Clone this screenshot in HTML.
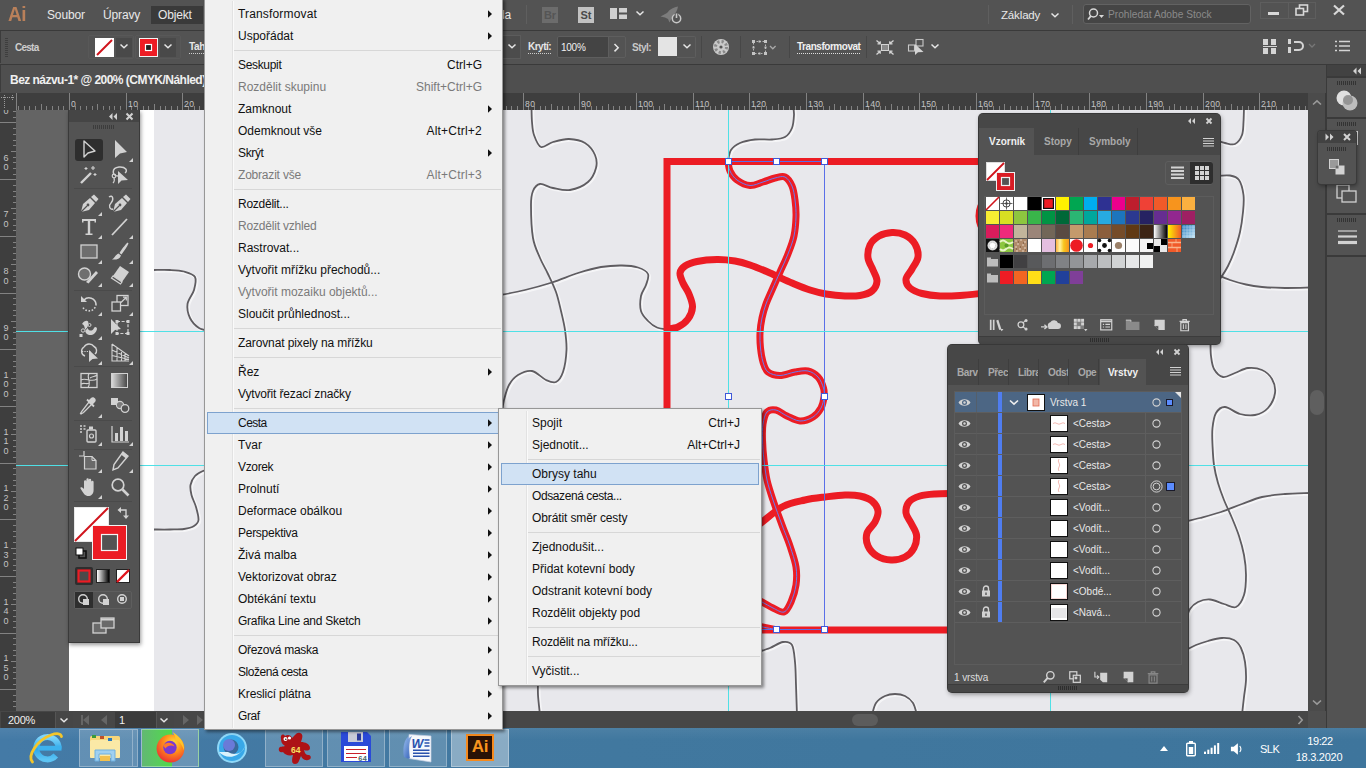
<!DOCTYPE html>
<html lang="cs">
<head>
<meta charset="utf-8">
<title>Adobe Illustrator – Objekt &gt; Cesta &gt; Obrysy tahu</title>
<style>
*{box-sizing:border-box;margin:0;padding:0}
html,body{width:1366px;height:768px;overflow:hidden;background:#535353;font-family:"Liberation Sans",sans-serif;font-size:12px;color:#e6e6e6}
.abs{position:absolute}
#root{position:relative;width:1366px;height:768px;overflow:hidden}
svg{display:block;overflow:visible}
/* ===== bars ===== */
#appbar{left:0;top:0;width:1366px;height:30px;background:#535353}
#appsep{left:0;top:30px;width:1366px;height:1px;background:#3a3a3a}
#ctrlbar{left:0;top:31px;width:1366px;height:33px;background:#535353}
#ctrlsep{left:0;top:64px;width:1366px;height:1px;background:#3a3a3a}
#tabbar{left:0;top:65px;width:1326px;height:28px;background:#4f4f4f}
#hruler{left:0;top:93px;width:1325px;height:17px;background:#404040}
#vruler{left:0;top:110px;width:16px;height:602px;background:#404040}
#paste{left:16px;top:110px;width:1292px;height:601px;background:#646464}
#artboard{left:69px;top:110px;width:1239px;height:601px;background:#fff}
#photo{left:154px;top:110px;width:1154px;height:601px;background:#e8e8ec}
#vscroll{left:1308px;top:93px;width:17px;height:637px;background:#535353}
#status{left:0;top:712px;width:1308px;height:18px;background:#535353}
#dock{left:1325px;top:66px;width:41px;height:664px;background:#424242}
#taskbar{left:0;top:730px;width:1366px;height:38px;background:#3d6f98}
.mtxt{top:8px;font-size:12px;line-height:15px;color:#e8e8e8;white-space:nowrap;letter-spacing:-.15px}
/*MENUCSS*/
.menu{background:#f0f0f0;border:1px solid #979797;box-shadow:2px 2px 3px rgba(0,0,0,.45)}
.mi{font-size:12px;line-height:22px;height:22px;color:#111;white-space:nowrap;letter-spacing:0}
.mi.dis{color:#7a7a7a}
/*MENUCSSE*/
/*PANCSS*/
.panel{background:#535353;border-radius:4px;box-shadow:0 0 0 1px #383838,1px 2px 5px rgba(0,0,0,.45)}
.ptab{height:27px;line-height:28px;font-size:10px;font-weight:bold;color:#a9a9a9;padding-left:10px;border-right:1px solid #3e3e3e;background:#474747;white-space:nowrap;overflow:hidden;letter-spacing:0}
.ptab.act{background:#535353;color:#f0f0f0;border-right:none}
.ltab{height:26px;line-height:27px;padding-left:9px;letter-spacing:-.4px}
.ltxt{font-size:10px;line-height:22px;color:#e8e8e8;white-space:nowrap;letter-spacing:0}
/*PANCSSE*/
</style>
</head>
<body>
<div id="root">
<!-- APPBAR -->

<div id="appbar" class="abs">
  <div class="abs" style="left:8px;top:2px;font-size:21px;line-height:24px;font-weight:bold;color:#b9805a;letter-spacing:-.5px;transform:scaleX(.9);transform-origin:0 0">Ai</div>
  <div class="abs mtxt" style="left:47px">Soubor</div>
  <div class="abs mtxt" style="left:103px">Úpravy</div>
  <div class="abs" style="left:151px;top:6px;width:52px;height:18px;background:#3a3a3a"></div>
  <div class="abs mtxt" style="left:158px">Objekt</div>
  <div class="abs mtxt" style="left:498px">da</div>
  <div class="abs" style="left:526px;top:5px;width:1px;height:19px;background:#5f5f5f"></div>
  <div class="abs" style="left:542px;top:7px;width:16px;height:16px;background:#6c6c6c;color:#555;font-weight:bold;font-size:11px;line-height:16px;text-align:center">Br</div>
  <div class="abs" style="left:578px;top:7px;width:16px;height:16px;background:#c2c2c2;color:#4a4a4a;font-weight:bold;font-size:11px;line-height:16px;text-align:center">St</div>
  <svg class="abs" style="left:610px;top:8px" width="18" height="12"><rect x="0" y="0" width="7" height="11" fill="#d0d0d0"/><rect x="9" y="0" width="8" height="4.5" fill="#d0d0d0"/><rect x="9" y="6.5" width="8" height="4.5" fill="#d0d0d0"/></svg>
  <svg class="abs" style="left:635px;top:10px" width="10" height="7"><path d="M1.5 1.5 L5 4.8 L8.5 1.5" fill="none" stroke="#e6e6e6" stroke-width="1.5"/></svg>
  <svg class="abs" style="left:659px;top:5px" width="24" height="20"><path d="M1.5 11.5 L8 8 C11 4 15 2 19 1.5 C18.5 5 17 8 13.5 11.5 L10.5 17.5 L9 14 L6 12.5 Z" fill="#7c7c7c"/><circle cx="17.5" cy="13.5" r="4.2" fill="#535353" stroke="#c8c8c8" stroke-width="1.5"/><path d="M17.5 8.2 V13" stroke="#535353" stroke-width="3.6"/><path d="M17.5 8.5 V13" stroke="#c8c8c8" stroke-width="1.6"/></svg>
  <div class="abs" style="left:988px;top:5px;width:1px;height:19px;background:#5f5f5f"></div>
  <div class="abs mtxt" style="left:1001px;font-size:11.5px">Základy</div>
  <svg class="abs" style="left:1050px;top:12px" width="10" height="7"><path d="M1.5 1.5 L5 4.8 L8.5 1.5" fill="none" stroke="#e6e6e6" stroke-width="1.5"/></svg>
  <div class="abs" style="left:1072px;top:5px;width:1px;height:19px;background:#5f5f5f"></div>
  <div class="abs" style="left:1083px;top:4px;width:168px;height:20px;background:#454545;border:1px solid #626262;border-radius:3px"></div>
  <svg class="abs" style="left:1087px;top:7px" width="20" height="14"><circle cx="6.5" cy="6" r="4" fill="none" stroke="#d8d8d8" stroke-width="1.5"/><path d="M3.8 9.2 L1 12.5" stroke="#d8d8d8" stroke-width="1.8"/><path d="M12 8 h5 l-2.5 3 z" fill="#d8d8d8"/></svg>
  <div class="abs" style="left:1108px;top:8px;font-size:10.2px;line-height:13px;color:#8a8a8a;white-space:nowrap">Prohledat Adobe Stock</div>
  <div class="abs" style="left:1260px;top:2px;width:28px;height:17px;border:1px solid #5e5e5e;border-right:none"></div>
  <div class="abs" style="left:1288px;top:2px;width:28px;height:17px;border:1px solid #5e5e5e;"></div>
  <div class="abs" style="left:1268px;top:12px;width:11px;height:3px;background:#d8d8d8"></div>
  <svg class="abs" style="left:1295px;top:4px" width="14" height="12"><rect x="4.5" y="1" width="8" height="6.5" fill="none" stroke="#d8d8d8" stroke-width="1.6"/><rect x="1" y="4.5" width="7.5" height="6.5" fill="#535353" stroke="#d8d8d8" stroke-width="1.6"/></svg>
  <svg class="abs" style="left:1332px;top:4px" width="14" height="12"><path d="M2 1.5 L12 10.5 M12 1.5 L2 10.5" stroke="#d8d8d8" stroke-width="2.2"/></svg>
</div>

<div id="appsep" class="abs"></div>

<div id="ctrlbar" class="abs">
  <div class="abs" style="left:0;top:0;width:1px;height:32px;background:#3c3c3c"></div>
  <div class="abs" style="left:5px;top:7px;width:3px;height:20px;background:repeating-linear-gradient(#3e3e3e 0 1px,#535353 1px 2px)"></div>
  <div class="abs" style="left:15px;top:10px;font-size:10px;line-height:13px;font-weight:bold;color:#cdcdcd;letter-spacing:-.75px">Cesta</div>
  <div class="abs" style="left:88px;top:4px;width:46px;height:24px;border:1px solid #585858;border-radius:2px"></div>
  <svg class="abs" style="left:95px;top:7px" width="19" height="19"><rect width="19" height="19" fill="#fff"/><path d="M2 17 L17 2" stroke="#d0141c" stroke-width="2"/></svg>
  <div class="abs" style="left:116px;top:7px;width:16px;height:19px;background:#494949"></div><svg class="abs" style="left:119px;top:12px" width="10" height="7"><path d="M1.5 1.5 L5 4.8 L8.5 1.5" fill="none" stroke="#e6e6e6" stroke-width="1.5"/></svg>
  <div class="abs" style="left:135px;top:4px;width:46px;height:24px;border:1px solid #585858;border-radius:2px"></div>
  <svg class="abs" style="left:139px;top:7px" width="19" height="19"><rect width="19" height="19" fill="#ed1c24"/><rect x="0.5" y="0.5" width="18" height="18" fill="none" stroke="#f3f3f3" stroke-width="1"/><rect x="6.5" y="6.5" width="6" height="6" fill="#222" stroke="#fff" stroke-width="1.2"/></svg>
  <div class="abs" style="left:160px;top:7px;width:16px;height:19px;background:#494949"></div><svg class="abs" style="left:163px;top:12px" width="10" height="7"><path d="M1.5 1.5 L5 4.8 L8.5 1.5" fill="none" stroke="#e6e6e6" stroke-width="1.5"/></svg>
  <div class="abs" style="left:189px;top:9px;font-size:10px;font-weight:bold;color:#e6e6e6;border-bottom:1px dotted #ccc;line-height:13px;letter-spacing:-.4px">Tah:</div>
  <div class="abs" style="left:503px;top:4px;width:18px;height:24px;border:1px solid #5c5c5c;border-left:none;background:#4c4c4c"></div><svg class="abs" style="left:507px;top:12px" width="10" height="7"><path d="M1.5 1.5 L5 4.8 L8.5 1.5" fill="none" stroke="#e6e6e6" stroke-width="1.5"/></svg>
  <div class="abs" style="left:528px;top:9px;font-size:10px;font-weight:bold;color:#e6e6e6;border-bottom:1px dotted #ccc;line-height:13px;letter-spacing:-.5px">Krytí:</div>
  <div class="abs" style="left:557px;top:5px;width:52px;height:22px;background:#444;border:1px solid #5e5e5e;border-radius:2px 0 0 2px"></div>
  <div class="abs" style="left:561px;top:10px;font-size:10px;line-height:13px;color:#f0f0f0;letter-spacing:-.25px">100%</div>
  <div class="abs" style="left:608px;top:5px;width:18px;height:22px;border:1px solid #5e5e5e;border-radius:0 2px 2px 0"></div>
  <svg class="abs" style="left:613px;top:12px" width="8" height="10"><path d="M1.5 1 L5.2 4.7 L1.5 8.4" fill="none" stroke="#e6e6e6" stroke-width="1.5"/></svg>
  <div class="abs" style="left:632px;top:10px;font-size:10px;line-height:13px;font-weight:bold;color:#c8c8c8;letter-spacing:-.5px">Styl:</div>
  <div class="abs" style="left:658px;top:6px;width:19px;height:19px;background:#e4e4e4"></div>
  <div class="abs" style="left:677px;top:5px;width:19px;height:22px;border:1px solid #5e5e5e;border-left:none;border-radius:0 2px 2px 0"></div><svg class="abs" style="left:682px;top:12px" width="10" height="7"><path d="M1.5 1.5 L5 4.8 L8.5 1.5" fill="none" stroke="#e6e6e6" stroke-width="1.5"/></svg>
  <div class="abs" style="left:701px;top:5px;width:1px;height:22px;background:#474747"></div>
  <svg class="abs" style="left:712px;top:7px" width="18" height="18"><circle cx="9" cy="9" r="8" fill="#c9c9c9"/><circle cx="9" cy="9" r="5.5" fill="none" stroke="#8a8a8a" stroke-width="3" stroke-dasharray="2.2 2.1"/><circle cx="9" cy="9" r="1.6" fill="#555"/></svg>
  <div class="abs" style="left:740px;top:5px;width:1px;height:22px;background:#474747"></div>
  <svg class="abs" style="left:752px;top:9px" width="34" height="16"><rect x="1.5" y="1.5" width="12" height="12" fill="none" stroke="#b4b4b4" stroke-width="1" stroke-dasharray="1.5 1.5"/><g fill="#c4c4c4"><rect x="0" y="0" width="3" height="3"/><rect x="12" y="0" width="3" height="3"/><rect x="0" y="12" width="3" height="3"/><rect x="12" y="12" width="3" height="3"/><rect x="6.5" y="0.5" width="2" height="2"/><rect x="6.5" y="12.5" width="2" height="2"/><rect x="0.5" y="6.5" width="2" height="2"/><rect x="12.5" y="6.5" width="2" height="2"/></g><path d="M18 6 L20.8 8.8 L23.6 6" fill="none" stroke="#a8a8a8" stroke-width="1.3"/></svg>
  <div class="abs" style="left:789px;top:5px;width:1px;height:22px;background:#474747"></div><div class="abs" style="left:866px;top:5px;width:1px;height:22px;background:#474747"></div>
  <div class="abs" style="left:797px;top:9px;font-size:10px;font-weight:bold;color:#f0f0f0;border-bottom:1px dotted #ddd;line-height:13px;letter-spacing:-.46px">Transformovat</div>
  <svg class="abs" style="left:876px;top:9px" width="18" height="15"><rect x="5.5" y="4.5" width="7" height="6" fill="#8a8a8a" stroke="#d4d4d4" stroke-width="1"/><g stroke="#d4d4d4" stroke-width="1.3" fill="none"><path d="M0.5 0.5 L4 3.5 M1.5 3.8 H4.2 V1.2"/><path d="M17.5 0.5 L14 3.5 M16.5 3.8 H13.8 V1.2"/><path d="M0.5 14.5 L4 11.5 M1.5 11.2 H4.2 V13.8"/><path d="M17.5 14.5 L14 11.5 M16.5 11.2 H13.8 V13.8"/></g></svg>
  <svg class="abs" style="left:907px;top:7px" width="20" height="20"><rect x="9" y="1.5" width="7" height="6.5" fill="none" stroke="#c8c8c8" stroke-width="1.1"/><rect x="1.5" y="7" width="6" height="6" fill="none" stroke="#c8c8c8" stroke-width="1.1"/><path d="M8 6 L8 17 L11 14.2 L16.5 14 Z" fill="#d4d4d4"/></svg><svg class="abs" style="left:930px;top:12px" width="10" height="7"><path d="M1.5 1.5 L5 4.8 L8.5 1.5" fill="none" stroke="#e6e6e6" stroke-width="1.5"/></svg>
  <svg class="abs" style="left:1263px;top:8px" width="15" height="15"><rect x="0" y="0" width="5" height="6" fill="#d4d4d4"/><rect x="8" y="0" width="5" height="6" fill="#d4d4d4"/><rect x="0" y="9" width="5" height="6" fill="#d4d4d4"/><rect x="8" y="9" width="5" height="6" fill="#d4d4d4"/><rect x="0" y="7" width="14" height="1" fill="#d4d4d4"/></svg>
  <svg class="abs" style="left:1288px;top:7px" width="30" height="17"><rect x="0" y="1" width="3" height="5" fill="#d4d4d4"/><rect x="0" y="9" width="3" height="6" fill="#d4d4d4"/><path d="M6 4 H11 A4 4 0 0 1 11 12 H6" fill="none" stroke="#d4d4d4" stroke-width="2"/><path d="M21 6 L24 9 L27 6" fill="none" stroke="#777" stroke-width="1.3"/></svg>
  <svg class="abs" style="left:1335px;top:9px" width="16" height="12"><path d="M4 1.5 H15 M4 6 H15 M4 10.5 H15" stroke="#d4d4d4" stroke-width="1.6"/><path d="M0 1.5 H2 M0 6 H2 M0 10.5 H2" stroke="#d4d4d4" stroke-width="1.6"/></svg>
</div>

<div id="ctrlsep" class="abs"></div>

<div id="tabbar" class="abs">
  <div class="abs" style="left:0;top:0;width:1px;height:27px;background:#3c3c3c"></div>
  <div class="abs" style="left:10px;top:8px;font-size:12px;line-height:15px;font-weight:bold;color:#f0f0f0;white-space:nowrap;letter-spacing:-.53px">Bez názvu-1* @ 200% (CMYK/Náhled)</div>
</div>

<svg id="hruler" class="abs" width="1326" height="17" style="left:0;top:93px;background:#3e3e3e;overflow:hidden">
<path d="M18.5 13V17M24.5 13V17M29.5 13V17M35.5 13V17M41.5 11V17M46.5 13V17M52.5 13V17M58.5 13V17M63.5 13V17M69.5 0V17M75.5 13V17M80.5 13V17M86.5 13V17M92.5 13V17M97.5 11V17M103.5 13V17M109.5 13V17M114.5 13V17M120.5 13V17M126.5 0V17M131.5 13V17M137.5 13V17M143.5 13V17M148.5 13V17M154.5 11V17M160.5 13V17M165.5 13V17M171.5 13V17M177.5 13V17M182.5 0V17M188.5 13V17M194.5 13V17M199.5 13V17M205.5 13V17M211.5 11V17M216.5 13V17M222.5 13V17M228.5 13V17M233.5 13V17M239.5 0V17M245.5 13V17M250.5 13V17M256.5 13V17M262.5 13V17M267.5 11V17M273.5 13V17M279.5 13V17M284.5 13V17M290.5 13V17M296.5 0V17M301.5 13V17M307.5 13V17M313.5 13V17M318.5 13V17M324.5 11V17M330.5 13V17M335.5 13V17M341.5 13V17M347.5 13V17M352.5 0V17M358.5 13V17M364.5 13V17M369.5 13V17M375.5 13V17M381.5 11V17M386.5 13V17M392.5 13V17M398.5 13V17M403.5 13V17M409.5 0V17M415.5 13V17M420.5 13V17M426.5 13V17M432.5 13V17M437.5 11V17M443.5 13V17M449.5 13V17M454.5 13V17M460.5 13V17M466.5 0V17M471.5 13V17M477.5 13V17M483.5 13V17M489.5 13V17M494.5 11V17M500.5 13V17M506.5 13V17M511.5 13V17M517.5 13V17M523.5 0V17M528.5 13V17M534.5 13V17M540.5 13V17M545.5 13V17M551.5 11V17M557.5 13V17M562.5 13V17M568.5 13V17M574.5 13V17M579.5 0V17M585.5 13V17M591.5 13V17M596.5 13V17M602.5 13V17M608.5 11V17M613.5 13V17M619.5 13V17M625.5 13V17M630.5 13V17M636.5 0V17M642.5 13V17M647.5 13V17M653.5 13V17M659.5 13V17M664.5 11V17M670.5 13V17M676.5 13V17M681.5 13V17M687.5 13V17M693.5 0V17M698.5 13V17M704.5 13V17M710.5 13V17M715.5 13V17M721.5 11V17M727.5 13V17M732.5 13V17M738.5 13V17M744.5 13V17M749.5 0V17M755.5 13V17M761.5 13V17M766.5 13V17M772.5 13V17M778.5 11V17M783.5 13V17M789.5 13V17M795.5 13V17M800.5 13V17M806.5 0V17M812.5 13V17M817.5 13V17M823.5 13V17M829.5 13V17M834.5 11V17M840.5 13V17M846.5 13V17M851.5 13V17M857.5 13V17M863.5 0V17M868.5 13V17M874.5 13V17M880.5 13V17M885.5 13V17M891.5 11V17M897.5 13V17M902.5 13V17M908.5 13V17M914.5 13V17M919.5 0V17M925.5 13V17M931.5 13V17M936.5 13V17M942.5 13V17M948.5 11V17M953.5 13V17M959.5 13V17M965.5 13V17M970.5 13V17M976.5 0V17M982.5 13V17M987.5 13V17M993.5 13V17M999.5 13V17M1004.5 11V17M1010.5 13V17M1016.5 13V17M1021.5 13V17M1027.5 13V17M1033.5 0V17M1038.5 13V17M1044.5 13V17M1050.5 13V17M1055.5 13V17M1061.5 11V17M1067.5 13V17M1072.5 13V17M1078.5 13V17M1084.5 13V17M1089.5 0V17M1095.5 13V17M1101.5 13V17M1106.5 13V17M1112.5 13V17M1118.5 11V17M1123.5 13V17M1129.5 13V17M1135.5 13V17M1140.5 13V17M1146.5 0V17M1152.5 13V17M1157.5 13V17M1163.5 13V17M1169.5 13V17M1174.5 11V17M1180.5 13V17M1186.5 13V17M1191.5 13V17M1197.5 13V17M1203.5 0V17M1208.5 13V17M1214.5 13V17M1220.5 13V17M1225.5 13V17M1231.5 11V17M1237.5 13V17M1242.5 13V17M1248.5 13V17M1254.5 13V17M1259.5 0V17M1265.5 13V17M1271.5 13V17M1276.5 13V17M1282.5 13V17M1288.5 11V17M1294.5 13V17M1299.5 13V17M1305.5 13V17" stroke="#828282" stroke-width="1" fill="none"/>
<g font-size="8.6" fill="#c4c4c4" letter-spacing="0.35">
<text x="71" y="14">0</text>
<text x="128" y="14">10</text>
<text x="184" y="14">20</text>
<text x="241" y="14">30</text>
<text x="298" y="14">40</text>
<text x="354" y="14">50</text>
<text x="411" y="14">60</text>
<text x="468" y="14">70</text>
<text x="525" y="14">80</text>
<text x="581" y="14">90</text>
<text x="638" y="14">100</text>
<text x="695" y="14">110</text>
<text x="751" y="14">120</text>
<text x="808" y="14">130</text>
<text x="865" y="14">140</text>
<text x="921" y="14">150</text>
<text x="978" y="14">160</text>
<text x="1035" y="14">170</text>
<text x="1091" y="14">180</text>
<text x="1148" y="14">190</text>
<text x="1205" y="14">200</text>
<text x="1261" y="14">210</text>
</g>
<rect x="0" y="0" width="16" height="17" fill="#3e3e3e"/><path d="M4.5 2V15M12.5 2V8M1 4.5H15" stroke="#9a9a9a" stroke-width="1" stroke-dasharray="1 1" fill="none"/><path d="M16.5 0V17" stroke="#828282"/>
</svg>
<svg id="vruler" class="abs" width="16" height="601" style="left:0;top:110px;background:#3e3e3e;overflow:hidden">
<path d="M13 1.5H16M13 7.5H16M0 12.5H16M13 18.5H16M13 24.5H16M13 30.5H16M13 35.5H16M11 41.5H16M13 47.5H16M13 52.5H16M13 58.5H16M13 64.5H16M0 69.5H16M13 75.5H16M13 81.5H16M13 86.5H16M13 92.5H16M11 98.5H16M13 103.5H16M13 109.5H16M13 115.5H16M13 120.5H16M0 126.5H16M13 132.5H16M13 137.5H16M13 143.5H16M13 149.5H16M11 154.5H16M13 160.5H16M13 166.5H16M13 171.5H16M13 177.5H16M0 183.5H16M13 188.5H16M13 194.5H16M13 200.5H16M13 205.5H16M11 211.5H16M13 217.5H16M13 222.5H16M13 228.5H16M13 234.5H16M0 239.5H16M13 245.5H16M13 251.5H16M13 256.5H16M13 262.5H16M11 268.5H16M13 273.5H16M13 279.5H16M13 285.5H16M13 290.5H16M0 296.5H16M13 302.5H16M13 307.5H16M13 313.5H16M13 319.5H16M11 324.5H16M13 330.5H16M13 336.5H16M13 341.5H16M13 347.5H16M0 353.5H16M13 358.5H16M13 364.5H16M13 370.5H16M13 375.5H16M11 381.5H16M13 387.5H16M13 392.5H16M13 398.5H16M13 404.5H16M0 409.5H16M13 415.5H16M13 421.5H16M13 426.5H16M13 432.5H16M11 438.5H16M13 443.5H16M13 449.5H16M13 455.5H16M13 460.5H16M0 466.5H16M13 472.5H16M13 477.5H16M13 483.5H16M13 489.5H16M11 494.5H16M13 500.5H16M13 506.5H16M13 511.5H16M13 517.5H16M0 523.5H16M13 528.5H16M13 534.5H16M13 540.5H16M13 545.5H16M11 551.5H16M13 557.5H16M13 562.5H16M13 568.5H16M13 574.5H16M0 579.5H16M13 585.5H16M13 591.5H16M13 596.5H16" stroke="#828282" stroke-width="1" fill="none"/>
<g font-size="9" fill="#c4c4c4">
<text x="3.5" y="-6.0">5</text>
<text x="3.5" y="3.5">0</text>
<text x="3.5" y="50.7">6</text>
<text x="3.5" y="60.2">0</text>
<text x="3.5" y="107.4">7</text>
<text x="3.5" y="116.9">0</text>
<text x="3.5" y="164.1">8</text>
<text x="3.5" y="173.6">0</text>
<text x="3.5" y="220.8">9</text>
<text x="3.5" y="230.3">0</text>
<text x="3.5" y="267.9">1</text>
<text x="3.5" y="277.4">0</text>
<text x="3.5" y="286.9">0</text>
<text x="3.5" y="324.6">1</text>
<text x="3.5" y="334.1">1</text>
<text x="3.5" y="343.6">0</text>
<text x="3.5" y="381.3">1</text>
<text x="3.5" y="390.8">2</text>
<text x="3.5" y="400.3">0</text>
<text x="3.5" y="438.0">1</text>
<text x="3.5" y="447.5">3</text>
<text x="3.5" y="457.0">0</text>
<text x="3.5" y="494.7">1</text>
<text x="3.5" y="504.2">4</text>
<text x="3.5" y="513.7">0</text>
<text x="3.5" y="551.4">1</text>
<text x="3.5" y="560.9">5</text>
<text x="3.5" y="570.4">0</text>
</g></svg>
<div id="paste" class="abs"></div>
<div id="artboard" class="abs"></div>
<div id="photo" class="abs"></div>
<!-- CV-START --><svg id="cv" class="abs" style="left:0;top:0" width="1366" height="768" viewBox="0 0 1366 768"><defs><clipPath id="cvclip"><rect x="154" y="110" width="1154" height="601"/></clipPath><filter id="soft" x="-5%" y="-5%" width="110%" height="110%"><feGaussianBlur stdDeviation="0.55"/></filter></defs>
<g clip-path="url(#cvclip)">
<g fill="none" stroke="#fff" stroke-width="3" opacity=".6" transform="translate(1.2,1.2)" filter="url(#soft)">
<path d="M154.0 270.0C156.7 270.0 165.0 269.8 170.0 270.0C175.0 270.2 179.8 270.3 184.0 271.5C188.2 272.7 193.3 273.9 195.0 277.0C196.7 280.1 195.2 285.5 194.0 290.0C192.8 294.5 188.2 299.3 187.5 304.0C186.8 308.7 188.1 314.0 190.0 318.0C191.9 322.0 195.7 325.8 199.0 328.0C202.3 330.2 208.2 330.5 210.0 331.0"/>
<path d="M154.0 529.5C156.7 529.5 165.0 529.6 170.0 529.5C175.0 529.4 180.0 529.6 184.0 529.0C188.0 528.4 191.6 527.5 194.0 526.0C196.4 524.5 198.2 523.2 198.5 520.0C198.8 516.8 197.2 511.2 196.0 507.0C194.8 502.8 192.4 498.7 191.5 495.0C190.6 491.3 189.9 488.2 190.5 485.0C191.1 481.8 192.9 478.3 195.0 476.0C197.1 473.7 200.5 472.2 203.0 471.0C205.5 469.8 208.8 469.3 210.0 469.0"/>
<path d="M531.5 108.0C531.6 110.3 531.6 117.5 532.0 122.0C532.4 126.5 532.5 130.8 534.0 135.0C535.5 139.2 537.8 145.8 541.0 147.0C544.2 148.2 548.3 143.3 553.0 142.0C557.7 140.7 563.7 138.8 569.0 139.0C574.3 139.2 580.7 140.3 585.0 143.0C589.3 145.7 593.2 150.8 595.0 155.0C596.8 159.2 597.2 163.5 596.0 168.0C594.8 172.5 592.3 178.3 588.0 182.0C583.7 185.7 575.8 189.0 570.0 190.0C564.2 191.0 558.0 189.0 553.0 188.0C548.0 187.0 543.3 183.5 540.0 184.0C536.7 184.5 534.5 187.5 533.0 191.0C531.5 194.5 531.0 197.2 531.0 205.0C531.0 212.8 531.5 229.2 533.0 238.0C534.5 246.8 537.5 252.0 540.0 258.0C542.5 264.0 545.3 268.3 548.0 274.0C550.7 279.7 553.8 285.8 556.0 292.0C558.2 298.2 559.5 304.7 561.0 311.0C562.5 317.3 564.1 323.5 565.0 330.0C565.9 336.5 566.8 343.0 566.5 350.0C566.2 357.0 564.8 366.7 563.0 372.0C561.2 377.3 558.8 380.7 556.0 382.0C553.2 383.3 550.0 381.8 546.0 380.0C542.0 378.2 536.7 371.8 532.0 371.0C527.3 370.2 521.8 372.7 518.0 375.0C514.2 377.3 511.3 380.8 509.0 385.0C506.7 389.2 505.2 395.5 504.0 400.0C502.8 404.5 502.3 410.0 502.0 412.0"/>
<path d="M498.0 295.5C502.5 294.6 516.0 292.2 525.0 290.0C534.0 287.8 543.2 285.3 552.0 282.5C560.8 279.7 569.8 275.6 578.0 273.0C586.2 270.4 593.7 268.2 601.0 267.0C608.3 265.8 615.8 265.4 622.0 265.5C628.2 265.6 633.7 266.1 638.0 267.5C642.3 268.9 646.7 271.1 648.0 274.0C649.3 276.9 647.2 281.3 646.0 285.0C644.8 288.7 641.8 291.7 641.0 296.0C640.2 300.3 639.8 306.8 641.0 311.0C642.2 315.2 645.3 318.2 648.0 321.0C650.7 323.8 653.7 326.1 657.0 327.5C660.3 328.9 666.2 329.2 668.0 329.5"/>
<path d="M728.0 161.0C728.5 159.2 729.0 153.0 731.0 150.0C733.0 147.0 736.0 144.8 740.0 143.0C744.0 141.2 749.7 140.1 755.0 139.5C760.3 138.9 767.0 139.9 772.0 139.5C777.0 139.1 781.7 138.9 785.0 137.0C788.3 135.1 790.5 131.7 792.0 128.0C793.5 124.3 793.8 118.7 794.0 115.0C794.2 111.3 793.2 107.5 793.0 106.0"/>
<path d="M538.0 680.0C538.0 682.5 537.7 689.2 538.0 695.0C538.3 700.8 539.7 711.7 540.0 715.0"/>
<path d="M758.0 652.0C760.0 651.3 765.8 649.7 770.0 648.0C774.2 646.3 779.3 642.5 783.0 642.0C786.7 641.5 790.0 641.7 792.0 645.0C794.0 648.3 794.3 655.3 795.0 662.0C795.7 668.7 795.7 676.2 796.0 685.0C796.3 693.8 796.8 710.0 797.0 715.0"/>
<path d="M872.0 715.0C872.7 713.0 873.8 706.2 876.0 703.0C878.2 699.8 881.8 697.5 885.0 696.0C888.2 694.5 891.7 694.0 895.0 694.0C898.3 694.0 902.0 694.5 905.0 696.0C908.0 697.5 911.0 699.8 913.0 703.0C915.0 706.2 916.3 713.0 917.0 715.0"/>
<path d="M1244.0 108.0C1243.9 110.3 1243.8 117.5 1243.5 122.0C1243.2 126.5 1243.4 131.3 1242.0 135.0C1240.6 138.7 1237.8 142.7 1235.0 144.0C1232.2 145.3 1228.3 143.7 1225.0 143.0C1221.7 142.3 1216.7 140.5 1215.0 140.0"/>
<path d="M1215.0 176.0C1217.5 175.9 1226.0 174.8 1230.0 175.5C1234.0 176.2 1236.8 176.8 1239.0 180.0C1241.2 183.2 1242.8 189.7 1243.5 195.0C1244.2 200.3 1243.6 205.8 1243.0 212.0C1242.4 218.2 1241.5 225.3 1240.0 232.0C1238.5 238.7 1236.0 246.3 1234.0 252.0C1232.0 257.7 1230.3 261.5 1228.0 266.0C1225.7 270.5 1222.7 275.0 1220.0 279.0C1217.3 283.0 1213.3 288.2 1212.0 290.0"/>
<path d="M1215.0 274.0C1217.5 275.0 1224.8 278.2 1230.0 280.0C1235.2 281.8 1240.7 283.3 1246.0 284.5C1251.3 285.7 1255.5 286.4 1262.0 287.0C1268.5 287.6 1277.0 287.9 1285.0 288.0C1293.0 288.1 1305.8 287.6 1310.0 287.5"/>
<path d="M1210.5 343.0C1210.6 345.2 1210.4 351.7 1211.0 356.0C1211.6 360.3 1212.0 365.5 1214.0 369.0C1216.0 372.5 1219.5 376.3 1223.0 377.0C1226.5 377.7 1230.8 374.5 1235.0 373.0C1239.2 371.5 1243.5 368.5 1248.0 368.0C1252.5 367.5 1258.0 368.2 1262.0 370.0C1266.0 371.8 1269.8 375.2 1272.0 379.0C1274.2 382.8 1275.7 388.2 1275.0 393.0C1274.3 397.8 1271.3 404.3 1268.0 408.0C1264.7 411.7 1259.7 414.0 1255.0 415.0C1250.3 416.0 1245.0 415.3 1240.0 414.0C1235.0 412.7 1229.0 407.2 1225.0 407.0C1221.0 406.8 1218.1 409.5 1216.0 413.0C1213.9 416.5 1213.1 422.7 1212.5 428.0C1211.9 433.3 1212.2 438.8 1212.5 445.0C1212.8 451.2 1213.1 458.7 1214.0 465.0C1214.9 471.3 1216.3 477.2 1218.0 483.0C1219.7 488.8 1221.7 494.2 1224.0 500.0C1226.3 505.8 1229.5 512.0 1232.0 518.0C1234.5 524.0 1237.0 529.8 1239.0 536.0C1241.0 542.2 1242.8 548.5 1244.0 555.0C1245.2 561.5 1246.0 568.3 1246.0 575.0C1246.0 581.7 1245.7 589.7 1244.0 595.0C1242.3 600.3 1239.3 605.5 1236.0 607.0C1232.7 608.5 1228.3 605.2 1224.0 604.0C1219.7 602.8 1214.3 599.8 1210.0 599.5C1205.7 599.2 1201.3 600.4 1198.0 602.0C1194.7 603.6 1192.0 606.0 1190.0 609.0C1188.0 612.0 1186.7 618.2 1186.0 620.0"/>
<path d="M1183.0 522.0C1185.8 521.3 1193.7 519.7 1200.0 518.0C1206.3 516.3 1214.0 514.3 1221.0 512.0C1228.0 509.7 1235.2 506.5 1242.0 504.0C1248.8 501.5 1254.8 498.7 1262.0 497.0C1269.2 495.3 1277.0 494.7 1285.0 494.0C1293.0 493.3 1305.8 493.2 1310.0 493.0"/>
<path d="M1186.0 650.0C1187.7 649.2 1192.3 646.5 1196.0 645.0C1199.7 643.5 1203.7 642.2 1208.0 641.0C1212.3 639.8 1217.7 638.2 1222.0 638.0C1226.3 637.8 1230.8 638.3 1234.0 640.0C1237.2 641.7 1239.2 644.3 1241.0 648.0C1242.8 651.7 1244.2 656.7 1245.0 662.0C1245.8 667.3 1246.2 674.2 1246.0 680.0C1245.8 685.8 1244.7 691.2 1244.0 697.0C1243.3 702.8 1242.3 712.0 1242.0 715.0"/>
</g>
<g fill="none" stroke="#5e5c61" stroke-width="1.8" stroke-linecap="round" filter="url(#soft)">
<path d="M154.0 270.0C156.7 270.0 165.0 269.8 170.0 270.0C175.0 270.2 179.8 270.3 184.0 271.5C188.2 272.7 193.3 273.9 195.0 277.0C196.7 280.1 195.2 285.5 194.0 290.0C192.8 294.5 188.2 299.3 187.5 304.0C186.8 308.7 188.1 314.0 190.0 318.0C191.9 322.0 195.7 325.8 199.0 328.0C202.3 330.2 208.2 330.5 210.0 331.0"/>
<path d="M154.0 529.5C156.7 529.5 165.0 529.6 170.0 529.5C175.0 529.4 180.0 529.6 184.0 529.0C188.0 528.4 191.6 527.5 194.0 526.0C196.4 524.5 198.2 523.2 198.5 520.0C198.8 516.8 197.2 511.2 196.0 507.0C194.8 502.8 192.4 498.7 191.5 495.0C190.6 491.3 189.9 488.2 190.5 485.0C191.1 481.8 192.9 478.3 195.0 476.0C197.1 473.7 200.5 472.2 203.0 471.0C205.5 469.8 208.8 469.3 210.0 469.0"/>
<path d="M531.5 108.0C531.6 110.3 531.6 117.5 532.0 122.0C532.4 126.5 532.5 130.8 534.0 135.0C535.5 139.2 537.8 145.8 541.0 147.0C544.2 148.2 548.3 143.3 553.0 142.0C557.7 140.7 563.7 138.8 569.0 139.0C574.3 139.2 580.7 140.3 585.0 143.0C589.3 145.7 593.2 150.8 595.0 155.0C596.8 159.2 597.2 163.5 596.0 168.0C594.8 172.5 592.3 178.3 588.0 182.0C583.7 185.7 575.8 189.0 570.0 190.0C564.2 191.0 558.0 189.0 553.0 188.0C548.0 187.0 543.3 183.5 540.0 184.0C536.7 184.5 534.5 187.5 533.0 191.0C531.5 194.5 531.0 197.2 531.0 205.0C531.0 212.8 531.5 229.2 533.0 238.0C534.5 246.8 537.5 252.0 540.0 258.0C542.5 264.0 545.3 268.3 548.0 274.0C550.7 279.7 553.8 285.8 556.0 292.0C558.2 298.2 559.5 304.7 561.0 311.0C562.5 317.3 564.1 323.5 565.0 330.0C565.9 336.5 566.8 343.0 566.5 350.0C566.2 357.0 564.8 366.7 563.0 372.0C561.2 377.3 558.8 380.7 556.0 382.0C553.2 383.3 550.0 381.8 546.0 380.0C542.0 378.2 536.7 371.8 532.0 371.0C527.3 370.2 521.8 372.7 518.0 375.0C514.2 377.3 511.3 380.8 509.0 385.0C506.7 389.2 505.2 395.5 504.0 400.0C502.8 404.5 502.3 410.0 502.0 412.0"/>
<path d="M498.0 295.5C502.5 294.6 516.0 292.2 525.0 290.0C534.0 287.8 543.2 285.3 552.0 282.5C560.8 279.7 569.8 275.6 578.0 273.0C586.2 270.4 593.7 268.2 601.0 267.0C608.3 265.8 615.8 265.4 622.0 265.5C628.2 265.6 633.7 266.1 638.0 267.5C642.3 268.9 646.7 271.1 648.0 274.0C649.3 276.9 647.2 281.3 646.0 285.0C644.8 288.7 641.8 291.7 641.0 296.0C640.2 300.3 639.8 306.8 641.0 311.0C642.2 315.2 645.3 318.2 648.0 321.0C650.7 323.8 653.7 326.1 657.0 327.5C660.3 328.9 666.2 329.2 668.0 329.5"/>
<path d="M728.0 161.0C728.5 159.2 729.0 153.0 731.0 150.0C733.0 147.0 736.0 144.8 740.0 143.0C744.0 141.2 749.7 140.1 755.0 139.5C760.3 138.9 767.0 139.9 772.0 139.5C777.0 139.1 781.7 138.9 785.0 137.0C788.3 135.1 790.5 131.7 792.0 128.0C793.5 124.3 793.8 118.7 794.0 115.0C794.2 111.3 793.2 107.5 793.0 106.0"/>
<path d="M538.0 680.0C538.0 682.5 537.7 689.2 538.0 695.0C538.3 700.8 539.7 711.7 540.0 715.0"/>
<path d="M758.0 652.0C760.0 651.3 765.8 649.7 770.0 648.0C774.2 646.3 779.3 642.5 783.0 642.0C786.7 641.5 790.0 641.7 792.0 645.0C794.0 648.3 794.3 655.3 795.0 662.0C795.7 668.7 795.7 676.2 796.0 685.0C796.3 693.8 796.8 710.0 797.0 715.0"/>
<path d="M872.0 715.0C872.7 713.0 873.8 706.2 876.0 703.0C878.2 699.8 881.8 697.5 885.0 696.0C888.2 694.5 891.7 694.0 895.0 694.0C898.3 694.0 902.0 694.5 905.0 696.0C908.0 697.5 911.0 699.8 913.0 703.0C915.0 706.2 916.3 713.0 917.0 715.0"/>
<path d="M1244.0 108.0C1243.9 110.3 1243.8 117.5 1243.5 122.0C1243.2 126.5 1243.4 131.3 1242.0 135.0C1240.6 138.7 1237.8 142.7 1235.0 144.0C1232.2 145.3 1228.3 143.7 1225.0 143.0C1221.7 142.3 1216.7 140.5 1215.0 140.0"/>
<path d="M1215.0 176.0C1217.5 175.9 1226.0 174.8 1230.0 175.5C1234.0 176.2 1236.8 176.8 1239.0 180.0C1241.2 183.2 1242.8 189.7 1243.5 195.0C1244.2 200.3 1243.6 205.8 1243.0 212.0C1242.4 218.2 1241.5 225.3 1240.0 232.0C1238.5 238.7 1236.0 246.3 1234.0 252.0C1232.0 257.7 1230.3 261.5 1228.0 266.0C1225.7 270.5 1222.7 275.0 1220.0 279.0C1217.3 283.0 1213.3 288.2 1212.0 290.0"/>
<path d="M1215.0 274.0C1217.5 275.0 1224.8 278.2 1230.0 280.0C1235.2 281.8 1240.7 283.3 1246.0 284.5C1251.3 285.7 1255.5 286.4 1262.0 287.0C1268.5 287.6 1277.0 287.9 1285.0 288.0C1293.0 288.1 1305.8 287.6 1310.0 287.5"/>
<path d="M1210.5 343.0C1210.6 345.2 1210.4 351.7 1211.0 356.0C1211.6 360.3 1212.0 365.5 1214.0 369.0C1216.0 372.5 1219.5 376.3 1223.0 377.0C1226.5 377.7 1230.8 374.5 1235.0 373.0C1239.2 371.5 1243.5 368.5 1248.0 368.0C1252.5 367.5 1258.0 368.2 1262.0 370.0C1266.0 371.8 1269.8 375.2 1272.0 379.0C1274.2 382.8 1275.7 388.2 1275.0 393.0C1274.3 397.8 1271.3 404.3 1268.0 408.0C1264.7 411.7 1259.7 414.0 1255.0 415.0C1250.3 416.0 1245.0 415.3 1240.0 414.0C1235.0 412.7 1229.0 407.2 1225.0 407.0C1221.0 406.8 1218.1 409.5 1216.0 413.0C1213.9 416.5 1213.1 422.7 1212.5 428.0C1211.9 433.3 1212.2 438.8 1212.5 445.0C1212.8 451.2 1213.1 458.7 1214.0 465.0C1214.9 471.3 1216.3 477.2 1218.0 483.0C1219.7 488.8 1221.7 494.2 1224.0 500.0C1226.3 505.8 1229.5 512.0 1232.0 518.0C1234.5 524.0 1237.0 529.8 1239.0 536.0C1241.0 542.2 1242.8 548.5 1244.0 555.0C1245.2 561.5 1246.0 568.3 1246.0 575.0C1246.0 581.7 1245.7 589.7 1244.0 595.0C1242.3 600.3 1239.3 605.5 1236.0 607.0C1232.7 608.5 1228.3 605.2 1224.0 604.0C1219.7 602.8 1214.3 599.8 1210.0 599.5C1205.7 599.2 1201.3 600.4 1198.0 602.0C1194.7 603.6 1192.0 606.0 1190.0 609.0C1188.0 612.0 1186.7 618.2 1186.0 620.0"/>
<path d="M1183.0 522.0C1185.8 521.3 1193.7 519.7 1200.0 518.0C1206.3 516.3 1214.0 514.3 1221.0 512.0C1228.0 509.7 1235.2 506.5 1242.0 504.0C1248.8 501.5 1254.8 498.7 1262.0 497.0C1269.2 495.3 1277.0 494.7 1285.0 494.0C1293.0 493.3 1305.8 493.2 1310.0 493.0"/>
<path d="M1186.0 650.0C1187.7 649.2 1192.3 646.5 1196.0 645.0C1199.7 643.5 1203.7 642.2 1208.0 641.0C1212.3 639.8 1217.7 638.2 1222.0 638.0C1226.3 637.8 1230.8 638.3 1234.0 640.0C1237.2 641.7 1239.2 644.3 1241.0 648.0C1242.8 651.7 1244.2 656.7 1245.0 662.0C1245.8 667.3 1246.2 674.2 1246.0 680.0C1245.8 685.8 1244.7 691.2 1244.0 697.0C1243.3 702.8 1242.3 712.0 1242.0 715.0"/>
</g>
<g fill="none" stroke="#ec1c24" stroke-width="7" stroke-linejoin="miter">
<path d="M1100 161.5 H667 V630 H1100"/><circle cx="1004" cy="216" r="25"/>
<path d="M667.0 329.0C668.8 328.7 674.5 328.7 678.0 327.0C681.5 325.3 685.6 322.3 688.0 319.0C690.4 315.7 692.3 311.2 692.5 307.0C692.7 302.8 690.6 298.0 689.0 294.0C687.4 290.0 684.5 286.5 683.0 283.0C681.5 279.5 679.7 275.8 680.0 273.0C680.3 270.2 682.2 267.9 685.0 266.0C687.8 264.1 691.7 262.6 697.0 261.5C702.3 260.4 710.7 259.6 717.0 259.5C723.3 259.4 729.5 260.1 735.0 261.0C740.5 261.9 744.2 263.0 750.0 265.0C755.8 267.0 763.0 270.0 770.0 273.0C777.0 276.0 785.3 280.2 792.0 283.0C798.7 285.8 804.3 288.2 810.0 290.0C815.7 291.8 820.2 293.0 826.0 294.0C831.8 295.0 839.3 295.8 845.0 296.0C850.7 296.2 855.5 296.3 860.0 295.5C864.5 294.7 869.2 293.4 872.0 291.0C874.8 288.6 876.8 284.5 877.0 281.0C877.2 277.5 874.5 273.8 873.0 270.0C871.5 266.2 868.5 262.2 868.0 258.0C867.5 253.8 868.2 248.7 870.0 245.0C871.8 241.3 875.3 238.1 879.0 236.0C882.7 233.9 887.7 232.7 892.0 232.5C896.3 232.3 901.2 233.1 905.0 235.0C908.8 236.9 912.8 240.3 915.0 244.0C917.2 247.7 918.5 252.8 918.0 257.0C917.5 261.2 914.0 265.3 912.0 269.0C910.0 272.7 906.3 275.8 906.0 279.0C905.7 282.2 907.3 285.6 910.0 288.0C912.7 290.4 917.0 292.2 922.0 293.5C927.0 294.8 933.7 295.7 940.0 296.0C946.3 296.3 952.5 296.0 960.0 295.5C967.5 295.0 980.8 293.4 985.0 293.0"/>
<path d="M728.0 161.0C728.3 162.7 728.5 167.8 730.0 171.0C731.5 174.2 733.7 177.6 737.0 180.0C740.3 182.4 745.7 185.2 750.0 185.5C754.3 185.8 758.8 183.2 763.0 182.0C767.2 180.8 771.3 178.8 775.0 178.0C778.7 177.2 782.2 175.7 785.0 177.0C787.8 178.3 790.3 182.2 792.0 186.0C793.7 189.8 794.3 194.8 795.0 200.0C795.7 205.2 796.2 211.0 796.0 217.0C795.8 223.0 795.3 229.8 794.0 236.0C792.7 242.2 790.3 248.0 788.0 254.0C785.7 260.0 782.7 266.0 780.0 272.0C777.3 278.0 774.3 284.7 772.0 290.0C769.7 295.3 767.7 299.3 766.0 304.0C764.3 308.7 763.0 313.2 762.0 318.0C761.0 322.8 760.2 328.0 760.0 333.0C759.8 338.0 760.0 343.2 760.5 348.0C761.0 352.8 761.8 358.0 763.0 362.0C764.2 366.0 765.2 369.8 768.0 372.0C770.8 374.2 775.5 375.5 780.0 375.5C784.5 375.5 790.3 372.8 795.0 372.0C799.7 371.2 804.2 370.2 808.0 371.0C811.8 371.8 815.4 374.2 818.0 377.0C820.6 379.8 822.5 384.7 823.5 388.0C824.5 391.3 824.4 393.7 824.0 397.0C823.6 400.3 822.8 404.7 821.0 408.0C819.2 411.3 816.5 414.8 813.0 417.0C809.5 419.2 804.3 421.2 800.0 421.0C795.7 420.8 791.0 417.8 787.0 416.0C783.0 414.2 779.3 410.7 776.0 410.0C772.7 409.3 769.2 409.7 767.0 412.0C764.8 414.3 763.8 419.3 763.0 424.0C762.2 428.7 762.3 434.0 762.5 440.0C762.7 446.0 763.2 453.3 764.0 460.0C764.8 466.7 765.5 473.3 767.0 480.0C768.5 486.7 770.5 492.5 773.0 500.0C775.5 507.5 779.2 517.3 782.0 525.0C784.8 532.7 787.7 539.0 790.0 546.0C792.3 553.0 795.0 560.5 796.0 567.0C797.0 573.5 796.8 579.2 796.0 585.0C795.2 590.8 793.0 597.5 791.0 602.0C789.0 606.5 787.0 611.0 784.0 612.0C781.0 613.0 776.7 609.7 773.0 608.0C769.3 606.3 765.5 603.7 762.0 602.0C758.5 600.3 755.0 597.7 752.0 598.0C749.0 598.3 745.2 601.0 744.0 604.0C742.8 607.0 743.0 612.5 745.0 616.0C747.0 619.5 750.8 622.8 756.0 625.0C761.2 627.2 772.7 628.8 776.0 629.5"/>
<path d="M745.0 535.0C747.7 533.0 754.7 527.8 761.0 523.0C767.3 518.2 775.7 510.3 783.0 506.5C790.3 502.7 798.0 501.6 805.0 500.0C812.0 498.4 818.3 497.8 825.0 497.0C831.7 496.2 839.2 495.2 845.0 495.0C850.8 494.8 855.5 495.0 860.0 496.0C864.5 497.0 869.0 498.5 872.0 501.0C875.0 503.5 877.5 507.5 878.0 511.0C878.5 514.5 876.8 518.3 875.0 522.0C873.2 525.7 868.2 529.0 867.0 533.0C865.8 537.0 866.3 542.2 868.0 546.0C869.7 549.8 873.2 553.7 877.0 556.0C880.8 558.3 886.3 559.8 891.0 560.0C895.7 560.2 901.2 559.0 905.0 557.0C908.8 555.0 912.1 551.7 914.0 548.0C915.9 544.3 917.0 539.2 916.5 535.0C916.0 530.8 912.8 526.7 911.0 523.0C909.2 519.3 906.3 516.5 906.0 513.0C905.7 509.5 906.7 504.8 909.0 502.0C911.3 499.2 915.7 497.3 920.0 496.0C924.3 494.7 929.2 494.4 935.0 494.0C940.8 493.6 951.7 493.6 955.0 493.5"/>
</g>
<path d="M728.0 161.0C728.3 162.7 728.5 167.8 730.0 171.0C731.5 174.2 733.7 177.6 737.0 180.0C740.3 182.4 745.7 185.2 750.0 185.5C754.3 185.8 758.8 183.2 763.0 182.0C767.2 180.8 771.3 178.8 775.0 178.0C778.7 177.2 782.2 175.7 785.0 177.0C787.8 178.3 790.3 182.2 792.0 186.0C793.7 189.8 794.3 194.8 795.0 200.0C795.7 205.2 796.2 211.0 796.0 217.0C795.8 223.0 795.3 229.8 794.0 236.0C792.7 242.2 790.3 248.0 788.0 254.0C785.7 260.0 782.7 266.0 780.0 272.0C777.3 278.0 774.3 284.7 772.0 290.0C769.7 295.3 767.7 299.3 766.0 304.0C764.3 308.7 763.0 313.2 762.0 318.0C761.0 322.8 760.2 328.0 760.0 333.0C759.8 338.0 760.0 343.2 760.5 348.0C761.0 352.8 761.8 358.0 763.0 362.0C764.2 366.0 765.2 369.8 768.0 372.0C770.8 374.2 775.5 375.5 780.0 375.5C784.5 375.5 790.3 372.8 795.0 372.0C799.7 371.2 804.2 370.2 808.0 371.0C811.8 371.8 815.4 374.2 818.0 377.0C820.6 379.8 822.5 384.7 823.5 388.0C824.5 391.3 824.4 393.7 824.0 397.0C823.6 400.3 822.8 404.7 821.0 408.0C819.2 411.3 816.5 414.8 813.0 417.0C809.5 419.2 804.3 421.2 800.0 421.0C795.7 420.8 791.0 417.8 787.0 416.0C783.0 414.2 779.3 410.7 776.0 410.0C772.7 409.3 769.2 409.7 767.0 412.0C764.8 414.3 763.8 419.3 763.0 424.0C762.2 428.7 762.3 434.0 762.5 440.0C762.7 446.0 763.2 453.3 764.0 460.0C764.8 466.7 765.5 473.3 767.0 480.0C768.5 486.7 770.5 492.5 773.0 500.0C775.5 507.5 779.2 517.3 782.0 525.0C784.8 532.7 787.7 539.0 790.0 546.0C792.3 553.0 795.0 560.5 796.0 567.0C797.0 573.5 796.8 579.2 796.0 585.0C795.2 590.8 793.0 597.5 791.0 602.0C789.0 606.5 787.0 611.0 784.0 612.0C781.0 613.0 776.7 609.7 773.0 608.0C769.3 606.3 765.5 603.7 762.0 602.0C758.5 600.3 755.0 597.7 752.0 598.0C749.0 598.3 745.2 601.0 744.0 604.0C742.8 607.0 743.0 612.5 745.0 616.0C747.0 619.5 750.8 622.8 756.0 625.0C761.2 627.2 772.7 628.8 776.0 629.5" fill="none" stroke="#6a7cf0" stroke-width="1"/>
<rect x="728.5" y="161.5" width="96" height="468" fill="none" stroke="#5a6fe8" stroke-width="1"/>
<path d="M16 331.5H1308M16 465.5H1308M728.5 110V712M1050.5 110V712" stroke="#4fe0e6" stroke-width="1" fill="none"/>
<rect x="725.5" y="158.5" width="6" height="6" fill="#fff" stroke="#3f58d8" stroke-width="1"/>
<rect x="773.5" y="158.5" width="6" height="6" fill="#fff" stroke="#3f58d8" stroke-width="1"/>
<rect x="821.5" y="158.5" width="6" height="6" fill="#fff" stroke="#3f58d8" stroke-width="1"/>
<rect x="725.5" y="393.5" width="6" height="6" fill="#fff" stroke="#3f58d8" stroke-width="1"/>
<rect x="821.5" y="393.5" width="6" height="6" fill="#fff" stroke="#3f58d8" stroke-width="1"/>
<rect x="725.5" y="626.5" width="6" height="6" fill="#fff" stroke="#3f58d8" stroke-width="1"/>
<rect x="773.5" y="626.5" width="6" height="6" fill="#fff" stroke="#3f58d8" stroke-width="1"/>
<rect x="821.5" y="626.5" width="6" height="6" fill="#fff" stroke="#3f58d8" stroke-width="1"/>
</g>
<path d="M16 331.5H154M16 465.5H154" stroke="#4fe0e6" stroke-width="1" fill="none"/>
</svg><!-- CV-END -->
<!-- TOOLS-S --><div id="tools" class="abs" style="left:68px;top:110px;width:72px;height:533px;background:#535353;border:1px solid #3a3a3a;border-top:none;box-shadow:1px 2px 4px rgba(0,0,0,.4)">
<div class="abs" style="left:0;top:0;width:70px;height:12px;background:#454545"></div>
<div class="abs" style="left:-1px;top:0;width:72px;height:532px">
<svg class="abs" style="left:40px;top:2px" width="26" height="9"><path d="M4.5 1 L1 4.5 L4.5 8 M9 1 L5.5 4.5 L9 8" fill="#d2d2d2" stroke="none"/><path d="M18.5 1.5 L24.5 7.5 M24.5 1.5 L18.5 7.5" stroke="#d2d2d2" stroke-width="2"/></svg>
<div class="abs" style="left:25px;top:15px;width:21px;height:4px;background:repeating-linear-gradient(90deg,#3c3c3c 0 1px,#535353 1px 2px)"></div>
<div class="abs" style="left:6px;top:78px;width:58px;height:1px;background:#4a4a4a"></div>
<div class="abs" style="left:6px;top:180px;width:58px;height:1px;background:#4a4a4a"></div>
<div class="abs" style="left:6px;top:256px;width:58px;height:1px;background:#4a4a4a"></div>
<div class="abs" style="left:6px;top:310px;width:58px;height:1px;background:#4a4a4a"></div>
<div class="abs" style="left:6px;top:339px;width:58px;height:1px;background:#4a4a4a"></div>
<div class="abs" style="left:6px;top:391px;width:58px;height:1px;background:#4a4a4a"></div>
<div class="abs" style="left:7px;top:29px;width:28px;height:22px;background:#2e2e2e;border-radius:3px"></div>
<svg class="abs" style="left:10.0px;top:28.5px" width="22" height="22" viewBox="0 0 22 22"><path d="M6 2 L6 18 L10 14 L17 12 Z" fill="none" stroke="#d2d2d2" stroke-width="1.4" stroke-linejoin="round" transform="translate(0,0)"/></svg>
<svg class="abs" style="left:41.0px;top:28.5px" width="22" height="22" viewBox="0 0 22 22"><path d="M6 1 L6 19 L11 14.5 L18 13 Z" fill="#d2d2d2"/></svg><svg class="abs" style="left:61px;top:47.5px" width="4" height="4"><path d="M4 0V4H0Z" fill="#d2d2d2"/></svg>
<svg class="abs" style="left:10.0px;top:54.0px" width="22" height="22" viewBox="0 0 22 22"><path d="M3 19 L13 9" stroke="#d2d2d2" stroke-width="2.4"/><path d="M15 2 v4 M13 4 h4 M8 3 v3 M6.5 4.5 h3 M17 9 v3 M15.5 10.5 h3" stroke="#d2d2d2" stroke-width="1.1"/></svg>
<svg class="abs" style="left:41.0px;top:54.0px" width="22" height="22" viewBox="0 0 22 22"><path d="M9 12 C3 12 2 4 10 3 C17 2.5 19 7 16 9" fill="none" stroke="#d2d2d2" stroke-width="1.5"/><circle cx="5" cy="12" r="1.8" fill="none" stroke="#d2d2d2" stroke-width="1.2"/><path d="M5 14 q1 3 -1 5" fill="none" stroke="#d2d2d2" stroke-width="1.2"/><path d="M9 7 L9 20 L12.5 16.5 L19 16 Z" fill="#d2d2d2"/></svg>
<svg class="abs" style="left:10.0px;top:82.5px" width="22" height="22" viewBox="0 0 22 22"><path d="M3 19 L5 11 L12 5 L17 10 L11 17 Z" fill="#d2d2d2"/><path d="M13 4 L16 1.5 L20.5 6 L18 9 Z" fill="#d2d2d2"/><path d="M3 19 L9 13" stroke="#535353" stroke-width="1.2"/><circle cx="10" cy="12" r="1.4" fill="#535353"/></svg><svg class="abs" style="left:30px;top:101.5px" width="4" height="4"><path d="M4 0V4H0Z" fill="#d2d2d2"/></svg>
<svg class="abs" style="left:39.0px;top:82.5px" width="26" height="22" viewBox="0 0 26 22"><g transform="translate(3,0)"><path d="M3 19 L5 11 L12 5 L17 10 L11 17 Z" fill="#d2d2d2"/><path d="M13 4 L16 1.5 L20.5 6 L18 9 Z" fill="#d2d2d2"/><path d="M3 19 L9 13" stroke="#535353" stroke-width="1.2"/><circle cx="10" cy="12" r="1.4" fill="#535353"/></g><path d="M2 4 C6 1 7 7 4 10 C1 13 3 17 6 16" fill="none" stroke="#d2d2d2" stroke-width="1.4"/></svg>
<svg class="abs" style="left:10.0px;top:106.0px" width="22" height="22" viewBox="0 0 22 22"><path d="M4 3 H18 V6.5 H16.5 V5 H12.2 V17.5 H14.5 V19 H7.5 V17.5 H9.8 V5 H5.5 V6.5 H4 Z" fill="#d2d2d2"/></svg><svg class="abs" style="left:30px;top:125px" width="4" height="4"><path d="M4 0V4H0Z" fill="#d2d2d2"/></svg>
<svg class="abs" style="left:41.0px;top:106.0px" width="22" height="22" viewBox="0 0 22 22"><path d="M3 19 L18 3" stroke="#d2d2d2" stroke-width="1.8"/></svg><svg class="abs" style="left:61px;top:125px" width="4" height="4"><path d="M4 0V4H0Z" fill="#d2d2d2"/></svg>
<svg class="abs" style="left:10.0px;top:130.5px" width="22" height="22" viewBox="0 0 22 22"><rect x="3" y="4" width="16" height="13" fill="#6e6e6e" stroke="#d2d2d2" stroke-width="1.3"/></svg><svg class="abs" style="left:30px;top:149.5px" width="4" height="4"><path d="M4 0V4H0Z" fill="#d2d2d2"/></svg>
<svg class="abs" style="left:41.0px;top:130.5px" width="22" height="22" viewBox="0 0 22 22"><path d="M18.5 1.5 C16 4 12 9 10.5 12 L12.5 13.5 C15 10 18 6 19.5 2.5 Z" fill="#d2d2d2"/><path d="M9.5 12.5 L12 14.5 C11 18 7 19 3 18.5 C6 17 6 14 9.5 12.5 Z" fill="#d2d2d2"/></svg><svg class="abs" style="left:61px;top:149.5px" width="4" height="4"><path d="M4 0V4H0Z" fill="#d2d2d2"/></svg>
<svg class="abs" style="left:9.0px;top:153.0px" width="24" height="24" viewBox="0 0 24 24"><circle cx="7.5" cy="11" r="6" fill="#6e6e6e" stroke="#d2d2d2" stroke-width="1.4"/><path d="M9 19 L19 8 L21 10 L11.5 20.5 Z" fill="#d2d2d2"/></svg><svg class="abs" style="left:30px;top:173px" width="4" height="4"><path d="M4 0V4H0Z" fill="#d2d2d2"/></svg>
<svg class="abs" style="left:41.0px;top:154.0px" width="22" height="22" viewBox="0 0 22 22"><path d="M11 2 L20 8 L13 18 L4 12 Z" fill="#d2d2d2"/><path d="M4 12 L13 18 L11.5 20 L2.5 14 Z" fill="#535353" stroke="#d2d2d2" stroke-width="1.2"/></svg><svg class="abs" style="left:61px;top:173px" width="4" height="4"><path d="M4 0V4H0Z" fill="#d2d2d2"/></svg>
<svg class="abs" style="left:10.0px;top:183.0px" width="22" height="22" viewBox="0 0 22 22"><path d="M6 7 A7 7 0 0 1 18 11" fill="none" stroke="#d2d2d2" stroke-width="1.6"/><path d="M18 11 A7 7 0 0 1 4.5 13.5" fill="none" stroke="#d2d2d2" stroke-width="1.6" stroke-dasharray="1.6 1.6"/><path d="M3 3 L3 9 L9 9 Z" fill="#d2d2d2"/></svg><svg class="abs" style="left:30px;top:202px" width="4" height="4"><path d="M4 0V4H0Z" fill="#d2d2d2"/></svg>
<svg class="abs" style="left:41.0px;top:183.0px" width="22" height="22" viewBox="0 0 22 22"><rect x="8" y="2.5" width="11" height="10" fill="none" stroke="#d2d2d2" stroke-width="1.3"/><rect x="3" y="9" width="8.5" height="9" fill="#535353" stroke="#d2d2d2" stroke-width="1.3"/><path d="M12 9.5 L17 4.5 M14 4.2 H17.3 V7.5" fill="none" stroke="#d2d2d2" stroke-width="1.2"/></svg><svg class="abs" style="left:61px;top:202px" width="4" height="4"><path d="M4 0V4H0Z" fill="#d2d2d2"/></svg>
<svg class="abs" style="left:10.0px;top:207.0px" width="22" height="22" viewBox="0 0 22 22"><path d="M4 7 C7 2 12 3 10 8 C8 13 14 16 16 11 C17 9 19 10 19 12 C18 18 11 20 8 16 C6 13 8 9 4 7 Z" fill="#d2d2d2"/><path d="M3 18 L11 9" stroke="#535353" stroke-width="1"/><circle cx="5" cy="13.5" r="1.7" fill="#535353" stroke="#d2d2d2" stroke-width="1"/><circle cx="11.5" cy="8" r="1.5" fill="#535353" stroke="#d2d2d2" stroke-width="1"/><rect x="1.5" y="17" width="3" height="3" fill="#d2d2d2"/></svg><svg class="abs" style="left:30px;top:226px" width="4" height="4"><path d="M4 0V4H0Z" fill="#d2d2d2"/></svg>
<svg class="abs" style="left:41.0px;top:207.0px" width="22" height="22" viewBox="0 0 22 22"><rect x="8" y="4.5" width="11" height="12" fill="none" stroke="#d2d2d2" stroke-width="1.2" stroke-dasharray="3 1.6"/><rect x="6.5" y="3" width="3" height="3" fill="#d2d2d2"/><rect x="17.5" y="3" width="3" height="3" fill="#d2d2d2"/><rect x="6.5" y="15" width="3" height="3" fill="#d2d2d2"/><rect x="17.5" y="15" width="3" height="3" fill="#d2d2d2"/><path d="M2 2 L2 17 L6 13 L12 12 Z" fill="#d2d2d2"/></svg>
<svg class="abs" style="left:10.0px;top:232.0px" width="22" height="22" viewBox="0 0 22 22"><path d="M7 14 A5 5 0 0 1 6 5 A6 6 0 0 1 16 4.5 A4.5 4.5 0 0 1 17 12" fill="none" stroke="#d2d2d2" stroke-width="1.4"/><path d="M4 9.5 H13" stroke="#d2d2d2" stroke-width="1.2" stroke-dasharray="1.2 1.2"/><path d="M11 8 L11 20 L14.5 17 L20 16.5 Z" fill="#d2d2d2"/></svg><svg class="abs" style="left:30px;top:251px" width="4" height="4"><path d="M4 0V4H0Z" fill="#d2d2d2"/></svg>
<svg class="abs" style="left:41.0px;top:232.0px" width="22" height="22" viewBox="0 0 22 22"><path d="M3 2 V19 H20 M3 2 L20 14 M3 8 L20 16 M3 13.5 L20 17.5 M8 5.5 V19 M12.5 8.7 V19 M16 11.2 V19" fill="none" stroke="#d2d2d2" stroke-width="1.1"/></svg><svg class="abs" style="left:61px;top:251px" width="4" height="4"><path d="M4 0V4H0Z" fill="#d2d2d2"/></svg>
<svg class="abs" style="left:10.0px;top:260.0px" width="22" height="22" viewBox="0 0 22 22"><rect x="3" y="3.5" width="16" height="14" fill="none" stroke="#d2d2d2" stroke-width="1.3"/><path d="M3 10 C8 7 13 13 19 9 M11 3.5 C8 8 14 12 10 17.5 M3 14 C7 12 8 15 11 13 M12 8 C15 6 17 7 19 5" fill="none" stroke="#d2d2d2" stroke-width="1.1"/></svg>
<div class="abs" style="left:43px;top:263px;width:17px;height:15px;border:1px solid #d2d2d2;background:linear-gradient(90deg,#d8d8d8,#4a4a4a)"></div>
<svg class="abs" style="left:10.0px;top:284.5px" width="22" height="22" viewBox="0 0 22 22"><path d="M13 3 C15 0.5 19.5 4 17 7 L14.5 9.5 L10.5 5.5 Z" fill="#d2d2d2"/><path d="M11 7 L13.5 9.5 L5.5 17.5 L3 19 L2.5 18.5 L4 16 Z" fill="none" stroke="#d2d2d2" stroke-width="1.3"/><path d="M9 4.5 L16 11.5" stroke="#d2d2d2" stroke-width="1.8"/></svg><svg class="abs" style="left:30px;top:303.5px" width="4" height="4"><path d="M4 0V4H0Z" fill="#d2d2d2"/></svg>
<svg class="abs" style="left:41.0px;top:284.5px" width="22" height="22" viewBox="0 0 22 22"><rect x="2" y="3" width="7" height="7" fill="#d2d2d2"/><circle cx="11" cy="10" r="3.6" fill="#7a7a7a" stroke="#d2d2d2" stroke-width="1.1"/><circle cx="16" cy="13.5" r="3.8" fill="#535353" stroke="#d2d2d2" stroke-width="1.3"/></svg>
<svg class="abs" style="left:10.0px;top:313.0px" width="22" height="22" viewBox="0 0 22 22"><rect x="9" y="7" width="9" height="12" rx="1" fill="none" stroke="#d2d2d2" stroke-width="1.4"/><rect x="11" y="3.5" width="4" height="3" fill="#d2d2d2"/><circle cx="13.5" cy="13" r="2" fill="none" stroke="#d2d2d2" stroke-width="1.2"/><path d="M2 3 h2 M5.5 3 h2 M2 6 h2 M5.5 6 h2 M2 9 h2" stroke="#d2d2d2" stroke-width="1.6"/></svg><svg class="abs" style="left:30px;top:332px" width="4" height="4"><path d="M4 0V4H0Z" fill="#d2d2d2"/></svg>
<svg class="abs" style="left:41.0px;top:313.0px" width="22" height="22" viewBox="0 0 22 22"><path d="M3 3 V19 H20" fill="none" stroke="#d2d2d2" stroke-width="1.2"/><rect x="6" y="10" width="3" height="8" fill="#d2d2d2"/><rect x="11" y="4" width="3" height="14" fill="#d2d2d2"/><rect x="16" y="8" width="3" height="10" fill="#d2d2d2"/></svg><svg class="abs" style="left:61px;top:332px" width="4" height="4"><path d="M4 0V4H0Z" fill="#d2d2d2"/></svg>
<svg class="abs" style="left:10.0px;top:340.0px" width="22" height="22" viewBox="0 0 22 22"><path d="M6 1 V6 M1 6 H6" stroke="#d2d2d2" stroke-width="1.2"/><path d="M6.5 6.5 H14 L18 10.5 V19 H6.5 Z" fill="#6a6a6a" stroke="#d2d2d2" stroke-width="1.2"/><path d="M14 6.5 V10.5 H18" fill="none" stroke="#d2d2d2" stroke-width="1"/></svg><svg class="abs" style="left:30px;top:359px" width="4" height="4"><path d="M4 0V4H0Z" fill="#d2d2d2"/></svg>
<svg class="abs" style="left:41.0px;top:340.0px" width="22" height="22" viewBox="0 0 22 22"><path d="M14 2 L19 6 L9 18 L4 20 L5 14.5 Z" fill="none" stroke="#d2d2d2" stroke-width="1.4"/><path d="M14 2 L19 6 L17 8.5 L12 4.5 Z" fill="#d2d2d2"/></svg><svg class="abs" style="left:61px;top:359px" width="4" height="4"><path d="M4 0V4H0Z" fill="#d2d2d2"/></svg>
<svg class="abs" style="left:10.0px;top:366.0px" width="22" height="22" viewBox="0 0 22 22"><path d="M6 11 V5.5 a1.2 1.2 0 0 1 2.4 0 V10 V3.5 a1.2 1.2 0 0 1 2.4 0 V10 V4 a1.2 1.2 0 0 1 2.4 0 V10.5 V6 a1.2 1.2 0 0 1 2.4 0 V14 C15.6 18 13 20 10.5 20 C7 20 5.5 17.5 2.5 12.5 C2 11 4 10.5 6 13 Z" fill="#d2d2d2"/></svg><svg class="abs" style="left:30px;top:385px" width="4" height="4"><path d="M4 0V4H0Z" fill="#d2d2d2"/></svg>
<svg class="abs" style="left:41.0px;top:366.0px" width="22" height="22" viewBox="0 0 22 22"><circle cx="9" cy="9" r="5.8" fill="none" stroke="#d2d2d2" stroke-width="1.7"/><path d="M13.5 13.5 L19.5 19.5" stroke="#d2d2d2" stroke-width="2.6"/></svg>
<svg class="abs" style="left:6px;top:397px" width="35" height="35"><rect x="0.5" y="0.5" width="34" height="34" fill="#fff" stroke="#e8e8e8"/><path d="M1 34 L34 1" stroke="#d0141c" stroke-width="2"/></svg>
<svg class="abs" style="left:24px;top:415px" width="35" height="35"><rect x="0.5" y="0.5" width="34" height="34" fill="#ec1c24" stroke="#f4f4f4" stroke-width="1"/><rect x="9.5" y="9.5" width="16" height="16" fill="#535353" stroke="#f4f4f4" stroke-width="1.2"/></svg>
<svg class="abs" style="left:49px;top:396px" width="14" height="14"><path d="M3 4 H9 V10" fill="none" stroke="#d2d2d2" stroke-width="1.4"/><path d="M0.5 4 L4 1 V7 Z M9 13 L6 9.5 H12 Z" fill="#d2d2d2"/></svg>
<svg class="abs" style="left:7px;top:437px" width="12" height="12"><rect x="4" y="4" width="7" height="7" fill="#535353" stroke="#111" stroke-width="1.6"/><rect x="1" y="1" width="7" height="7" fill="#fff" stroke="#111" stroke-width="1"/></svg>
<div class="abs" style="left:7px;top:457px;width:18px;height:18px;background:#2e2e2e;border-radius:2px"></div>
<svg class="abs" style="left:9px;top:459px" width="14" height="14"><rect x="1.5" y="1.5" width="11" height="11" fill="#4a4a4a" stroke="#ec1c24" stroke-width="2.2"/></svg>
<div class="abs" style="left:28px;top:459px;width:14px;height:14px;border:1px solid #222;background:linear-gradient(90deg,#fff,#000)"></div>
<svg class="abs" style="left:48px;top:459px" width="14" height="14"><rect x="0.5" y="0.5" width="13" height="13" fill="#fff" stroke="#222"/><path d="M1 13 L13 1" stroke="#e0141c" stroke-width="2.4"/></svg>
<div class="abs" style="left:6px;top:481px;width:58px;height:18px;border:1px solid #5e5e5e;border-radius:2px"></div><div class="abs" style="left:7px;top:482px;width:18px;height:16px;background:#2e2e2e"></div>
<svg class="abs" style="left:9px;top:483px" width="15" height="14"><circle cx="6" cy="6" r="4.3" fill="none" stroke="#d2d2d2" stroke-width="1.4"/><rect x="6" y="6" width="6" height="6" fill="#d2d2d2"/></svg>
<svg class="abs" style="left:29px;top:483px" width="15" height="14"><circle cx="6" cy="6" r="4.3" fill="none" stroke="#d2d2d2" stroke-width="1.4"/><rect x="6" y="6" width="6" height="6" fill="#d2d2d2"/></svg>
<svg class="abs" style="left:48px;top:483px" width="15" height="14"><circle cx="6" cy="6" r="4.3" fill="none" stroke="#d2d2d2" stroke-width="1.4"/><rect x="4" y="4" width="4" height="4" fill="#d2d2d2"/></svg>
<svg class="abs" style="left:24px;top:507px" width="24" height="18"><rect x="1" y="6" width="13" height="10" fill="#6a6a6a" stroke="#d2d2d2" stroke-width="1.3"/><rect x="9" y="1" width="13" height="10" fill="#6a6a6a" stroke="#d2d2d2" stroke-width="1.3"/><path d="M9 2.5 H22" stroke="#d2d2d2" stroke-width="2"/></svg>
</div></div><!-- TOOLS-E -->
<!-- SWATCHES-S --><div id="swatches" class="abs panel" style="left:979px;top:114px;width:241px;height:230px">
<div class="abs" style="left:0;top:0;width:241px;height:14px;background:#474747;border-radius:4px 4px 0 0"></div>
<svg class="abs" style="right:6px;top:3px" width="28" height="9"><path d="M5 1 L2 4 L5 7 Z M9 1 L6 4 L9 7 Z" fill="#d2d2d2"/><path d="M20.5 1.5 L25.5 6.5 M25.5 1.5 L20.5 6.5" stroke="#d2d2d2" stroke-width="1.8"/></svg>
<div class="abs" style="left:0;top:14px;width:241px;height:27px;background:#474747"></div>
<div class="abs ptab act" style="left:0;top:14px;width:55px">Vzorník</div>
<div class="abs ptab" style="left:55px;top:14px;width:45px">Stopy</div>
<div class="abs ptab" style="left:100px;top:14px;width:59px">Symboly</div>
<svg class="abs" style="left:224px;top:24px" width="11" height="9"><path d="M0 0.5H11M0 3H11M0 5.5H11M0 8H11" stroke="#d2d2d2" stroke-width="1"/></svg>
<svg class="abs" style="left:7px;top:48px" width="19" height="19"><rect x="0.5" y="0.5" width="18" height="18" fill="#fff" stroke="#ddd"/><path d="M1 18 L18 1" stroke="#d0141c" stroke-width="1.8"/></svg>
<svg class="abs" style="left:17px;top:58px" width="19" height="19"><rect x="0.5" y="0.5" width="18" height="18" fill="#d91c24" stroke="#f0f0f0"/><rect x="5.5" y="5.5" width="8" height="8" fill="#535353" stroke="#f0f0f0" stroke-width="1.2"/></svg>
<div class="abs" style="left:186px;top:47px;width:48px;height:24px;border:1px solid #5e5e5e;border-radius:3px"></div>
<div class="abs" style="left:211px;top:48px;width:23px;height:22px;background:#2e2e2e;border-radius:0 3px 3px 0"></div>
<svg class="abs" style="left:192px;top:52px" width="13" height="14"><path d="M0 1.5H13M0 5H13M0 8.5H13M0 12H13" stroke="#d2d2d2" stroke-width="2"/></svg>
<svg class="abs" style="left:216px;top:52px" width="14" height="14"><g fill="#d2d2d2"><rect x="0" y="0" width="4" height="4"/><rect x="5" y="0" width="4" height="4"/><rect x="10" y="0" width="4" height="4"/><rect x="0" y="5" width="4" height="4"/><rect x="5" y="5" width="4" height="4"/><rect x="10" y="5" width="4" height="4"/><rect x="0" y="10" width="4" height="4"/><rect x="5" y="10" width="4" height="4"/><rect x="10" y="10" width="4" height="4"/></g></svg>
<div class="abs" style="left:5px;top:82px;width:230px;height:119px;border:1px solid #5c5c5c"></div>
<svg class="abs" style="left:0;top:0" width="241" height="230"><rect x="7" y="83" width="13" height="13" fill="#fff"/><path d="M7 96 L20 83" stroke="#d0141c" stroke-width="1.6"/><rect x="21" y="83" width="13" height="13" fill="#fff"/><circle cx="27.5" cy="89.5" r="3.6" fill="none" stroke="#444" stroke-width="1"/><circle cx="27.5" cy="89.5" r="1.3" fill="#444"/><path d="M27.5 83.5V95.5M21.5 89.5H33.5" stroke="#444" stroke-width=".8"/><rect x="35" y="83" width="13" height="13" fill="#ffffff"/><rect x="49" y="83" width="13" height="13" fill="#000000"/><rect x="63" y="83" width="13" height="13" fill="#fff"/><rect x="64" y="84" width="11" height="11" fill="#111"/><rect x="65.2" y="85.2" width="8.6" height="8.6" fill="#ed1c24"/><rect x="77" y="83" width="13" height="13" fill="#fff200"/><rect x="91" y="83" width="13" height="13" fill="#00a651"/><rect x="105" y="83" width="13" height="13" fill="#00aeef"/><rect x="119" y="83" width="13" height="13" fill="#2e3192"/><rect x="133" y="83" width="13" height="13" fill="#ec008c"/><rect x="147" y="83" width="13" height="13" fill="#be1e2d"/><rect x="161" y="83" width="13" height="13" fill="#ef4136"/><rect x="175" y="83" width="13" height="13" fill="#f15a29"/><rect x="189" y="83" width="13" height="13" fill="#f7941d"/><rect x="203" y="83" width="13" height="13" fill="#fbb040"/><rect x="7" y="97" width="13" height="13" fill="#f9ed32"/><rect x="21" y="97" width="13" height="13" fill="#d7df23"/><rect x="35" y="97" width="13" height="13" fill="#8dc63f"/><rect x="49" y="97" width="13" height="13" fill="#39b54a"/><rect x="63" y="97" width="13" height="13" fill="#009444"/><rect x="77" y="97" width="13" height="13" fill="#006838"/><rect x="91" y="97" width="13" height="13" fill="#2bb673"/><rect x="105" y="97" width="13" height="13" fill="#00a79d"/><rect x="119" y="97" width="13" height="13" fill="#27aae1"/><rect x="133" y="97" width="13" height="13" fill="#1c75bc"/><rect x="147" y="97" width="13" height="13" fill="#2b3990"/><rect x="161" y="97" width="13" height="13" fill="#262262"/><rect x="175" y="97" width="13" height="13" fill="#662d91"/><rect x="189" y="97" width="13" height="13" fill="#92278f"/><rect x="203" y="97" width="13" height="13" fill="#9e1f63"/><rect x="7" y="111" width="13" height="13" fill="#da1c5c"/><rect x="21" y="111" width="13" height="13" fill="#ee2a7b"/><rect x="35" y="111" width="13" height="13" fill="#c2b59b"/><rect x="49" y="111" width="13" height="13" fill="#9b8579"/><rect x="63" y="111" width="13" height="13" fill="#726658"/><rect x="77" y="111" width="13" height="13" fill="#594a42"/><rect x="91" y="111" width="13" height="13" fill="#c49a6c"/><rect x="105" y="111" width="13" height="13" fill="#a97c50"/><rect x="119" y="111" width="13" height="13" fill="#8b5e3c"/><rect x="133" y="111" width="13" height="13" fill="#754c29"/><rect x="147" y="111" width="13" height="13" fill="#603913"/><rect x="161" y="111" width="13" height="13" fill="#3c2415"/><rect x="175" y="111" width="13" height="13" fill="url(#sg1)"/><rect x="189" y="111" width="13" height="13" fill="url(#sg2)"/><rect x="203" y="111" width="13" height="13" fill="url(#sg4)"/><path d="M203 113H216M203 116H216M203 119H216M203 122H216M205 111V124M208 111V124M211 111V124M214 111V124" stroke="#fff" stroke-width=".7" opacity=".45"/><rect x="7" y="125" width="13" height="13" fill="#111"/><circle cx="13.5" cy="131.5" r="5" fill="#ddd"/><circle cx="13.5" cy="131.5" r="3" fill="#fff" stroke="#aaa" stroke-width=".6" stroke-dasharray="1 1"/><rect x="21" y="125" width="13" height="13" fill="#8cc63f"/><path d="M21 128 q3 -3 6 0 t7 0 M21 135 q3 3 6 0 t7 0" stroke="#e8f5c8" stroke-width="2" fill="none"/><circle cx="27.5" cy="131.5" r="2" fill="#5a9a2a"/><rect x="35" y="125" width="13" height="13" fill="#b08a6a"/><path d="M36 127h2M41 126h2M45 128h2M38 130h2M43 131h2M36 133h2M40 135h2M45 134h2M37 137h2M43 137h2" stroke="#e6d2c0" stroke-width="1.2"/><path d="M39 128h1M44 129h1M41 133h1M37 135h1M46 136h1" stroke="#6a4a32" stroke-width="1.2"/><rect x="49" y="125" width="13" height="13" fill="#ffffff"/><rect x="63" y="125" width="13" height="13" fill="#e4bfe0"/><rect x="77" y="125" width="13" height="13" fill="url(#sg3)"/><rect x="91" y="125" width="13" height="13" fill="#fff"/><circle cx="97.5" cy="131.5" r="6.3" fill="#ed1c24"/><rect x="105" y="125" width="13" height="13" fill="#fff"/><circle cx="111.5" cy="131.5" r="2.6" fill="#ed1c24"/><rect x="119" y="125" width="13" height="13" fill="#fff"/><circle cx="125.5" cy="131.5" r="2.4" fill="#111"/><circle cx="120.5" cy="126.5" r="1.8" fill="#111"/><circle cx="130.5" cy="126.5" r="1.8" fill="#111"/><circle cx="120.5" cy="136.5" r="1.8" fill="#111"/><circle cx="130.5" cy="136.5" r="1.8" fill="#111"/><rect x="133" y="125" width="13" height="13" fill="#fff"/><circle cx="139.5" cy="131.5" r="3.6" fill="#9b8068"/><rect x="147" y="125" width="13" height="13" fill="#fbfbfb"/><rect x="161" y="125" width="13" height="13" fill="#f4f4f4"/><rect x="168" y="129" width="6" height="6" fill="#000"/><rect x="175" y="125" width="13" height="13" fill="#e8e8e8"/><rect x="182" y="125" width="6" height="6" fill="#000"/><rect x="175" y="132" width="6" height="6" fill="#000"/><rect x="189" y="125" width="13" height="13" fill="#f15a29"/><path d="M189 128.5H202M189 133.5H202" stroke="#f9b48a" stroke-width="1.4"/><path d="M193 129V133M198 134V138M197 125V128" stroke="#f9b48a" stroke-width=".8"/><path d="M8 143.5H12V145H19V152.5H8Z" fill="#bdbdbd"/><rect x="21" y="141" width="13" height="13" fill="#000000"/><rect x="35" y="141" width="13" height="13" fill="#414042"/><rect x="49" y="141" width="13" height="13" fill="#58595b"/><rect x="63" y="141" width="13" height="13" fill="#6d6e71"/><rect x="77" y="141" width="13" height="13" fill="#808285"/><rect x="91" y="141" width="13" height="13" fill="#939598"/><rect x="105" y="141" width="13" height="13" fill="#a7a9ac"/><rect x="119" y="141" width="13" height="13" fill="#bcbec0"/><rect x="133" y="141" width="13" height="13" fill="#d1d3d4"/><rect x="147" y="141" width="13" height="13" fill="#e6e7e8"/><rect x="161" y="141" width="13" height="13" fill="#f1f2f2"/><path d="M8 159.5H12V161H19V168.5H8Z" fill="#bdbdbd"/><rect x="21" y="157" width="13" height="13" fill="#ed1c24"/><rect x="35" y="157" width="13" height="13" fill="#f26522"/><rect x="49" y="157" width="13" height="13" fill="#ffde17"/><rect x="63" y="157" width="13" height="13" fill="#00a651"/><rect x="77" y="157" width="13" height="13" fill="#21409a"/><rect x="91" y="157" width="13" height="13" fill="#7f3f98"/><defs><linearGradient id="sg1"><stop offset="0" stop-color="#fff"/><stop offset="1" stop-color="#000"/></linearGradient><linearGradient id="sg2"><stop offset="0" stop-color="#fff200"/><stop offset="1" stop-color="#f15a29"/></linearGradient><linearGradient id="sg3"><stop offset="0" stop-color="#fbb040"/><stop offset=".3" stop-color="#fff2a0"/><stop offset=".6" stop-color="#f7c51d"/><stop offset="1" stop-color="#f7941d"/></linearGradient><linearGradient id="sg4" x1="0" y1="0" x2="1" y2="1"><stop offset="0" stop-color="#1c75bc"/><stop offset="1" stop-color="#bfe3f5"/></linearGradient></defs></svg>
<svg class="abs" style="left:10.4px;top:204.2px" width="15.3" height="13.6" viewBox="0 0 18 16"><path d="M2 2V14M5.5 2V14" stroke="#d2d2d2" stroke-width="2"/><path d="M8.5 3 L11 2 L14.5 13 L12 14 Z" fill="#d2d2d2"/><path d="M13 13h4l-2 2.5z" fill="#d2d2d2"/></svg>
<svg class="abs" style="left:36.4px;top:204.2px" width="15.3" height="13.6" viewBox="0 0 18 16"><circle cx="7" cy="8" r="3.4" fill="none" stroke="#d2d2d2" stroke-width="1.5"/><circle cx="13" cy="3" r="1.8" fill="#d2d2d2"/><circle cx="13" cy="13" r="1.8" fill="#d2d2d2"/><path d="M9 6 L12 3.5 M9 10 L12 12.5" stroke="#d2d2d2" stroke-width="1.2"/></svg>
<svg class="abs" style="left:61.8px;top:204.2px" width="20.4" height="13.6" viewBox="0 0 24 16"><path d="M9 13 H20 A3.5 3.5 0 0 0 20 6 A5 5 0 0 0 11 5 A4 4 0 0 0 8 9" fill="#d2d2d2"/><path d="M0 10.5 H6 M4 8 L7 10.5 L4 13" fill="none" stroke="#d2d2d2" stroke-width="1.6"/></svg>
<svg class="abs" style="left:94.3px;top:204.2px" width="15.3" height="13.6" viewBox="0 0 18 16"><g fill="#d2d2d2"><rect x="1" y="1" width="12" height="12" opacity=".35"/><rect x="1" y="1" width="3.4" height="3.4"/><rect x="5.3" y="1" width="3.4" height="3.4"/><rect x="9.6" y="1" width="3.4" height="3.4"/><rect x="1" y="5.3" width="3.4" height="3.4"/><rect x="9.6" y="5.3" width="3.4" height="3.4"/><rect x="5.3" y="9.6" width="3.4" height="3.4"/><rect x="1" y="9.6" width="3.4" height="3.4"/></g><path d="M13 13h4l-2 2.5z" fill="#d2d2d2"/></svg>
<svg class="abs" style="left:120.3px;top:204.2px" width="15.3" height="13.6" viewBox="0 0 18 16"><rect x="2" y="2" width="13" height="12" fill="none" stroke="#d2d2d2" stroke-width="1.4"/><path d="M2 4H15" stroke="#d2d2d2" stroke-width="2"/><path d="M4.5 7.5h1.5M7.5 7.5H13M4.5 10.5h1.5M7.5 10.5H13" stroke="#d2d2d2" stroke-width="1.2"/></svg>
<svg class="abs" style="left:146.3px;top:204.2px" width="15.3" height="13.6" viewBox="0 0 18 16"><path d="M1 2.5H7V4.5H17V14H1Z" fill="#8a8a8a"/><path d="M1 2.5H7V4.5" fill="none" stroke="#d2d2d2" stroke-width="1"/></svg>
<svg class="abs" style="left:173.3px;top:204.2px" width="15.3" height="13.6" viewBox="0 0 18 16"><path d="M3 2H15V14H8L3 9Z" fill="#d2d2d2"/><path d="M3 9H8V14" fill="#535353" stroke="#d2d2d2" stroke-width="1"/></svg>
<svg class="abs" style="left:198.3px;top:204.2px" width="15.3" height="13.6" viewBox="0 0 18 16"><path d="M3 4H15M7 4V2H11V4" fill="none" stroke="#d2d2d2" stroke-width="1.4"/><path d="M4.5 5.5H13.5V15H4.5Z" fill="none" stroke="#d2d2d2" stroke-width="1.4"/><path d="M7.5 7.5V13M10.5 7.5V13" stroke="#d2d2d2" stroke-width="1.2"/></svg>
<div class="abs" style="left:0;top:222px;width:241px;height:8px;background:#474747;border-top:1px solid #3c3c3c;border-radius:0 0 3px 3px"></div>
<div class="abs" style="left:111px;top:224px;width:20px;height:4px;background:repeating-linear-gradient(90deg,#2e2e2e 0 1px,#474747 1px 2px)"></div>
</div><!-- SWATCHES-E -->
<!-- LAYERS-S --><div id="layers" class="abs panel" style="left:948px;top:345px;width:240px;height:347px">
<div class="abs" style="left:0;top:0;width:240px;height:14px;background:#474747;border-radius:4px 4px 0 0"></div>
<svg class="abs" style="right:6px;top:3px" width="28" height="9"><path d="M5 1 L2 4 L5 7 Z M9 1 L6 4 L9 7 Z" fill="#d2d2d2"/><path d="M20.5 1.5 L25.5 6.5 M25.5 1.5 L20.5 6.5" stroke="#d2d2d2" stroke-width="1.8"/></svg>
<div class="abs" style="left:0;top:14px;width:240px;height:26px;background:#474747"></div>
<div class="abs ptab ltab" style="left:0px;top:14px;width:31px">Barv</div>
<div class="abs ptab ltab" style="left:31px;top:14px;width:30px">Přec</div>
<div class="abs ptab ltab" style="left:61px;top:14px;width:30px">Libra</div>
<div class="abs ptab ltab" style="left:91px;top:14px;width:30px">Odst</div>
<div class="abs ptab ltab" style="left:121px;top:14px;width:30px">Ope</div>
<div class="abs ptab act" style="left:152px;top:14px;width:46px;padding-left:8px">Vrstvy</div>
<svg class="abs" style="left:222px;top:22px" width="11" height="9"><path d="M0 0.5H11M0 3H11M0 5.5H11M0 8H11" stroke="#d2d2d2" stroke-width="1"/></svg>
<div class="abs" style="left:6px;top:46px;width:228px;height:274px;border:1px solid #5c5c5c"></div>
<div class="abs" style="left:7px;top:47px;width:226px;height:21px;background:#4c6684"></div>
<div class="abs" style="left:7px;top:67px;width:226px;height:1px;background:#5e5e5e"></div>
<svg class="abs" style="left:9px;top:52px" width="16" height="11"><path d="M1.5 5.5 C4 1.2 11 1.2 13.5 5.5 C11 9.8 4 9.8 1.5 5.5 Z" fill="#d2d2d2"/><circle cx="7.5" cy="5.5" r="2.5" fill="#4c6684"/><circle cx="7.5" cy="5.5" r="1.2" fill="#d2d2d2"/></svg>
<div class="abs" style="left:50px;top:47px;width:4px;height:20px;background:#4f7df0"></div>
<svg class="abs" style="left:61px;top:54px" width="10" height="7"><path d="M1 1.5 L5 5.2 L9 1.5" fill="none" stroke="#eee" stroke-width="1.6"/></svg>
<svg class="abs" style="left:79px;top:49px" width="18" height="17"><rect x="0.5" y="0.5" width="17" height="16" fill="#fff" stroke="#111"/><rect x="6" y="5" width="6" height="7" fill="#f2b8a8" stroke="#e06a50" stroke-width=".8"/></svg>
<div class="abs ltxt" style="left:102px;top:47px">Vrstva 1</div>
<svg class="abs" style="left:204px;top:53px" width="9" height="9"><circle cx="4.5" cy="4.5" r="3.6" fill="none" stroke="#d2d2d2" stroke-width="1.1"/></svg>
<div class="abs" style="left:218px;top:54px;width:7px;height:7px;background:#5b8cff;border:1px solid #1a1a2a;box-sizing:border-box"></div>
<svg class="abs" style="left:227px;top:47px" width="6" height="6"><path d="M0 0H6V6Z" fill="#e6e6e6"/></svg>
<div class="abs" style="left:7px;top:88px;width:226px;height:1px;background:#5e5e5e"></div>
<svg class="abs" style="left:9px;top:73px" width="16" height="11"><path d="M1.5 5.5 C4 1.2 11 1.2 13.5 5.5 C11 9.8 4 9.8 1.5 5.5 Z" fill="#d2d2d2"/><circle cx="7.5" cy="5.5" r="2.5" fill="#535353"/><circle cx="7.5" cy="5.5" r="1.2" fill="#d2d2d2"/></svg>
<div class="abs" style="left:50px;top:68px;width:4px;height:20px;background:#4f7df0"></div>
<svg class="abs" style="left:102px;top:70px" width="18" height="17"><rect x="0.5" y="0.5" width="17" height="16" fill="#fff" stroke="#111"/><path d="M3 8.5 q2 -1.5 4 0 t4 0 t4 0" fill="none" stroke="#f0a8a0" stroke-width=".8"/></svg>
<div class="abs ltxt" style="left:125px;top:68px">&lt;Cesta&gt;</div>
<svg class="abs" style="left:204px;top:74px" width="9" height="9"><circle cx="4.5" cy="4.5" r="3.6" fill="none" stroke="#d2d2d2" stroke-width="1.1"/></svg>
<div class="abs" style="left:7px;top:109px;width:226px;height:1px;background:#5e5e5e"></div>
<svg class="abs" style="left:9px;top:94px" width="16" height="11"><path d="M1.5 5.5 C4 1.2 11 1.2 13.5 5.5 C11 9.8 4 9.8 1.5 5.5 Z" fill="#d2d2d2"/><circle cx="7.5" cy="5.5" r="2.5" fill="#535353"/><circle cx="7.5" cy="5.5" r="1.2" fill="#d2d2d2"/></svg>
<div class="abs" style="left:50px;top:89px;width:4px;height:20px;background:#4f7df0"></div>
<svg class="abs" style="left:102px;top:91px" width="18" height="17"><rect x="0.5" y="0.5" width="17" height="16" fill="#fff" stroke="#111"/><path d="M3 8.5 q2 -1.5 4 0 t4 0 t4 0" fill="none" stroke="#f0a8a0" stroke-width=".8"/></svg>
<div class="abs ltxt" style="left:125px;top:89px">&lt;Cesta&gt;</div>
<svg class="abs" style="left:204px;top:95px" width="9" height="9"><circle cx="4.5" cy="4.5" r="3.6" fill="none" stroke="#d2d2d2" stroke-width="1.1"/></svg>
<div class="abs" style="left:7px;top:130px;width:226px;height:1px;background:#5e5e5e"></div>
<svg class="abs" style="left:9px;top:115px" width="16" height="11"><path d="M1.5 5.5 C4 1.2 11 1.2 13.5 5.5 C11 9.8 4 9.8 1.5 5.5 Z" fill="#d2d2d2"/><circle cx="7.5" cy="5.5" r="2.5" fill="#535353"/><circle cx="7.5" cy="5.5" r="1.2" fill="#d2d2d2"/></svg>
<div class="abs" style="left:50px;top:110px;width:4px;height:20px;background:#4f7df0"></div>
<svg class="abs" style="left:102px;top:112px" width="18" height="17"><rect x="0.5" y="0.5" width="17" height="16" fill="#fff" stroke="#111"/><path d="M9 2 q-1.5 2 0 4 t0 4 t0 4" fill="none" stroke="#f0a8a0" stroke-width=".8"/></svg>
<div class="abs ltxt" style="left:125px;top:110px">&lt;Cesta&gt;</div>
<svg class="abs" style="left:204px;top:116px" width="9" height="9"><circle cx="4.5" cy="4.5" r="3.6" fill="none" stroke="#d2d2d2" stroke-width="1.1"/></svg>
<div class="abs" style="left:7px;top:151px;width:226px;height:1px;background:#5e5e5e"></div>
<svg class="abs" style="left:9px;top:136px" width="16" height="11"><path d="M1.5 5.5 C4 1.2 11 1.2 13.5 5.5 C11 9.8 4 9.8 1.5 5.5 Z" fill="#d2d2d2"/><circle cx="7.5" cy="5.5" r="2.5" fill="#535353"/><circle cx="7.5" cy="5.5" r="1.2" fill="#d2d2d2"/></svg>
<div class="abs" style="left:50px;top:131px;width:4px;height:20px;background:#4f7df0"></div>
<svg class="abs" style="left:102px;top:133px" width="18" height="17"><rect x="0.5" y="0.5" width="17" height="16" fill="#fff" stroke="#111"/><path d="M9 2 q-1.5 2 0 4 t0 4 t0 4" fill="none" stroke="#f0a8a0" stroke-width=".8"/></svg>
<div class="abs ltxt" style="left:125px;top:131px">&lt;Cesta&gt;</div>
<svg class="abs" style="left:202px;top:135px" width="13" height="13"><circle cx="6.5" cy="6.5" r="5.6" fill="none" stroke="#d2d2d2" stroke-width="1"/><circle cx="6.5" cy="6.5" r="3.4" fill="none" stroke="#d2d2d2" stroke-width="1"/></svg>
<div class="abs" style="left:218px;top:137px;width:9px;height:9px;background:#5b8cff;border:1px solid #1a1a2a;box-sizing:border-box"></div>
<div class="abs" style="left:7px;top:172px;width:226px;height:1px;background:#5e5e5e"></div>
<svg class="abs" style="left:9px;top:157px" width="16" height="11"><path d="M1.5 5.5 C4 1.2 11 1.2 13.5 5.5 C11 9.8 4 9.8 1.5 5.5 Z" fill="#d2d2d2"/><circle cx="7.5" cy="5.5" r="2.5" fill="#535353"/><circle cx="7.5" cy="5.5" r="1.2" fill="#d2d2d2"/></svg>
<div class="abs" style="left:50px;top:152px;width:4px;height:20px;background:#4f7df0"></div>
<svg class="abs" style="left:102px;top:154px" width="18" height="17"><rect x="0.5" y="0.5" width="17" height="16" fill="#fff" stroke="#111"/></svg>
<div class="abs ltxt" style="left:125px;top:152px">&lt;Vodít...</div>
<svg class="abs" style="left:204px;top:158px" width="9" height="9"><circle cx="4.5" cy="4.5" r="3.6" fill="none" stroke="#d2d2d2" stroke-width="1.1"/></svg>
<div class="abs" style="left:7px;top:193px;width:226px;height:1px;background:#5e5e5e"></div>
<svg class="abs" style="left:9px;top:178px" width="16" height="11"><path d="M1.5 5.5 C4 1.2 11 1.2 13.5 5.5 C11 9.8 4 9.8 1.5 5.5 Z" fill="#d2d2d2"/><circle cx="7.5" cy="5.5" r="2.5" fill="#535353"/><circle cx="7.5" cy="5.5" r="1.2" fill="#d2d2d2"/></svg>
<div class="abs" style="left:50px;top:173px;width:4px;height:20px;background:#4f7df0"></div>
<svg class="abs" style="left:102px;top:175px" width="18" height="17"><rect x="0.5" y="0.5" width="17" height="16" fill="#fff" stroke="#111"/></svg>
<div class="abs ltxt" style="left:125px;top:173px">&lt;Vodít...</div>
<svg class="abs" style="left:204px;top:179px" width="9" height="9"><circle cx="4.5" cy="4.5" r="3.6" fill="none" stroke="#d2d2d2" stroke-width="1.1"/></svg>
<div class="abs" style="left:7px;top:214px;width:226px;height:1px;background:#5e5e5e"></div>
<svg class="abs" style="left:9px;top:199px" width="16" height="11"><path d="M1.5 5.5 C4 1.2 11 1.2 13.5 5.5 C11 9.8 4 9.8 1.5 5.5 Z" fill="#d2d2d2"/><circle cx="7.5" cy="5.5" r="2.5" fill="#535353"/><circle cx="7.5" cy="5.5" r="1.2" fill="#d2d2d2"/></svg>
<div class="abs" style="left:50px;top:194px;width:4px;height:20px;background:#4f7df0"></div>
<svg class="abs" style="left:102px;top:196px" width="18" height="17"><rect x="0.5" y="0.5" width="17" height="16" fill="#fff" stroke="#111"/></svg>
<div class="abs ltxt" style="left:125px;top:194px">&lt;Vodít...</div>
<svg class="abs" style="left:204px;top:200px" width="9" height="9"><circle cx="4.5" cy="4.5" r="3.6" fill="none" stroke="#d2d2d2" stroke-width="1.1"/></svg>
<div class="abs" style="left:7px;top:235px;width:226px;height:1px;background:#5e5e5e"></div>
<svg class="abs" style="left:9px;top:220px" width="16" height="11"><path d="M1.5 5.5 C4 1.2 11 1.2 13.5 5.5 C11 9.8 4 9.8 1.5 5.5 Z" fill="#d2d2d2"/><circle cx="7.5" cy="5.5" r="2.5" fill="#535353"/><circle cx="7.5" cy="5.5" r="1.2" fill="#d2d2d2"/></svg>
<div class="abs" style="left:50px;top:215px;width:4px;height:20px;background:#4f7df0"></div>
<svg class="abs" style="left:102px;top:217px" width="18" height="17"><rect x="0.5" y="0.5" width="17" height="16" fill="#fff" stroke="#111"/></svg>
<div class="abs ltxt" style="left:125px;top:215px">&lt;Vodít...</div>
<svg class="abs" style="left:204px;top:221px" width="9" height="9"><circle cx="4.5" cy="4.5" r="3.6" fill="none" stroke="#d2d2d2" stroke-width="1.1"/></svg>
<div class="abs" style="left:7px;top:256px;width:226px;height:1px;background:#5e5e5e"></div>
<svg class="abs" style="left:9px;top:241px" width="16" height="11"><path d="M1.5 5.5 C4 1.2 11 1.2 13.5 5.5 C11 9.8 4 9.8 1.5 5.5 Z" fill="#d2d2d2"/><circle cx="7.5" cy="5.5" r="2.5" fill="#535353"/><circle cx="7.5" cy="5.5" r="1.2" fill="#d2d2d2"/></svg>
<div class="abs" style="left:50px;top:236px;width:4px;height:20px;background:#4f7df0"></div>
<svg class="abs" style="left:102px;top:238px" width="18" height="17"><rect x="0.5" y="0.5" width="17" height="16" fill="#fff" stroke="#111"/><rect x="1.5" y="1.5" width="15" height="14" fill="none" stroke="#f8d0cc" stroke-width=".8"/></svg>
<div class="abs ltxt" style="left:125px;top:236px">&lt;Obdé...</div>
<svg class="abs" style="left:33px;top:240px" width="10" height="12"><path d="M2.5 6V3.5A2.5 2.5 0 0 1 7.5 3.5V6" fill="none" stroke="#d2d2d2" stroke-width="1.4"/><rect x="1" y="5.5" width="8" height="6" fill="#d2d2d2"/><rect x="4.3" y="7.5" width="1.4" height="2.5" fill="#535353"/></svg>
<svg class="abs" style="left:204px;top:242px" width="9" height="9"><circle cx="4.5" cy="4.5" r="3.6" fill="none" stroke="#d2d2d2" stroke-width="1.1"/></svg>
<div class="abs" style="left:7px;top:277px;width:226px;height:1px;background:#5e5e5e"></div>
<svg class="abs" style="left:9px;top:262px" width="16" height="11"><path d="M1.5 5.5 C4 1.2 11 1.2 13.5 5.5 C11 9.8 4 9.8 1.5 5.5 Z" fill="#d2d2d2"/><circle cx="7.5" cy="5.5" r="2.5" fill="#535353"/><circle cx="7.5" cy="5.5" r="1.2" fill="#d2d2d2"/></svg>
<div class="abs" style="left:50px;top:257px;width:4px;height:20px;background:#4f7df0"></div>
<svg class="abs" style="left:102px;top:259px" width="18" height="17"><rect x="0.5" y="0.5" width="17" height="16" fill="#fff" stroke="#111"/><rect x="1.5" y="4" width="15" height="10" fill="#e6e6e8"/></svg>
<div class="abs ltxt" style="left:125px;top:257px">&lt;Navá...</div>
<svg class="abs" style="left:33px;top:261px" width="10" height="12"><path d="M2.5 6V3.5A2.5 2.5 0 0 1 7.5 3.5V6" fill="none" stroke="#d2d2d2" stroke-width="1.4"/><rect x="1" y="5.5" width="8" height="6" fill="#d2d2d2"/><rect x="4.3" y="7.5" width="1.4" height="2.5" fill="#535353"/></svg>
<svg class="abs" style="left:204px;top:263px" width="9" height="9"><circle cx="4.5" cy="4.5" r="3.6" fill="none" stroke="#d2d2d2" stroke-width="1.1"/></svg>
<div class="abs" style="left:28px;top:47px;width:1px;height:231px;background:#5a5a5a;opacity:.6"></div>
<div class="abs" style="left:197px;top:68px;width:1px;height:210px;background:#5e5e5e"></div>
<div class="abs" style="left:6px;top:326px;font-size:10px;line-height:13px;color:#ddd;letter-spacing:-.1px">1 vrstva</div>
<svg class="abs" style="left:94.0px;top:325.0px" width="14.1" height="14.1" viewBox="0 0 16 16"><circle cx="9.5" cy="6" r="4.2" fill="none" stroke="#d2d2d2" stroke-width="1.6"/><path d="M6.5 9 L2 14" stroke="#d2d2d2" stroke-width="2.2"/></svg>
<svg class="abs" style="left:120.0px;top:325.0px" width="14.1" height="14.1" viewBox="0 0 16 16"><rect x="2" y="2" width="8" height="8" fill="none" stroke="#d2d2d2" stroke-width="1.4"/><rect x="6" y="6" width="8" height="8" fill="#535353" stroke="#d2d2d2" stroke-width="1.4"/><rect x="7.5" y="7.5" width="3" height="3" fill="#d2d2d2"/></svg>
<svg class="abs" style="left:146.0px;top:325.0px" width="14.1" height="14.1" viewBox="0 0 16 16"><path d="M7 3H15V14H10L7 11Z" fill="#d2d2d2"/><path d="M1 2V8H5M3.5 6L5.5 8L3.5 10" fill="none" stroke="#d2d2d2" stroke-width="1.3"/></svg>
<svg class="abs" style="left:173.0px;top:325.0px" width="14.1" height="14.1" viewBox="0 0 16 16"><path d="M3 2H14V14H8L3 9Z" fill="#d2d2d2"/><path d="M3 9H8V14" fill="#535353" stroke="#d2d2d2" stroke-width="1"/></svg>
<svg class="abs" style="left:198.0px;top:325.0px" width="14.1" height="14.1" viewBox="0 0 16 16"><g opacity=".4"><path d="M2 4H14M6 4V2H10V4" fill="none" stroke="#d2d2d2" stroke-width="1.4"/><path d="M3.5 5.5H12.5V15H3.5Z" fill="none" stroke="#d2d2d2" stroke-width="1.4"/><path d="M6.5 7.5V13M9.5 7.5V13" stroke="#d2d2d2" stroke-width="1.2"/></g></svg>
<div class="abs" style="left:0;top:339px;width:240px;height:8px;background:#474747;border-top:1px solid #3c3c3c;border-radius:0 0 3px 3px"></div>
<div class="abs" style="left:110px;top:341px;width:20px;height:4px;background:repeating-linear-gradient(90deg,#2e2e2e 0 1px,#474747 1px 2px)"></div>
</div><!-- LAYERS-E -->
<!-- VSCROLL-S --><div id="vscroll" class="abs" style="left:1308px;top:93px;width:18px;height:618px;background:#4b4b4b">
<div class="abs" style="left:17px;top:0;width:1px;height:618px;background:#3a3a3a"></div>
<svg class="abs" style="left:4px;top:6px" width="10" height="7"><path d="M1 5.5 L5 1.8 L9 5.5" fill="none" stroke="#9a9a9a" stroke-width="1.6"/></svg>
<svg class="abs" style="left:4px;top:606px" width="10" height="7"><path d="M1 1.5 L5 5.2 L9 1.5" fill="none" stroke="#9a9a9a" stroke-width="1.6"/></svg>
<div class="abs" style="left:2px;top:297px;width:14px;height:25px;border-radius:7px;background:#5f5f5f"></div>
</div><!-- VSCROLL-E -->
<!-- STATUS-S --><div id="status" class="abs" style="left:0;top:711px;width:1326px;height:17px;background:#474747">
<div class="abs" style="left:1px;top:1px;width:54px;height:16px;background:#3b3b3b"></div>
<div class="abs" style="left:8px;top:3px;font-size:11px;color:#f0f0f0;letter-spacing:-.3px">200%</div>
<div class="abs" style="left:55px;top:1px;width:18px;height:16px;background:#464646;border-left:1px solid #555"></div><svg class="abs" style="left:59px;top:6px" width="10" height="7"><path d="M1.5 1.5 L5 4.8 L8.5 1.5" fill="none" stroke="#e6e6e6" stroke-width="1.5"/></svg>
<svg class="abs" style="left:80px;top:4px" width="30" height="10"><path d="M2 0V10" stroke="#666" stroke-width="2"/><path d="M9 0V10L3 5Z M27 0V10L21 5Z" fill="#666"/></svg>
<div class="abs" style="left:115px;top:1px;width:41px;height:16px;background:#3b3b3b"></div>
<div class="abs" style="left:119px;top:3px;font-size:11px;color:#f0f0f0">1</div>
<div class="abs" style="left:156px;top:1px;width:18px;height:16px;background:#464646;border-left:1px solid #555"></div><svg class="abs" style="left:159px;top:6px" width="10" height="7"><path d="M1.5 1.5 L5 4.8 L8.5 1.5" fill="none" stroke="#e6e6e6" stroke-width="1.5"/></svg>
<svg class="abs" style="left:181px;top:4px" width="30" height="10"><path d="M2 0V10L8 5Z M16 0V10L22 5Z" fill="#666"/><path d="M24 0V10" stroke="#666" stroke-width="2"/></svg>
<div class="abs" style="left:852px;top:3px;width:26px;height:12px;border-radius:6px;background:#5c5c5c"></div>
<svg class="abs" style="left:1297px;top:4px" width="7" height="10"><path d="M1.5 1 L5.2 5 L1.5 9" fill="none" stroke="#9a9a9a" stroke-width="1.6"/></svg>
<div class="abs" style="left:1308px;top:0;width:18px;height:17px;background:#4f4f4f"></div>
</div><!-- STATUS-E -->
<!-- DOCK-S --><div id="dock" class="abs" style="left:1326px;top:65px;width:40px;height:663px;background:#535353;border-left:1px solid #3a3a3a">
<div class="abs" style="left:0;top:0;width:40px;height:11px;background:#424242"></div>
<svg class="abs" style="left:25px;top:2px" width="10" height="8"><path d="M4.5 0.5 L1 4 L4.5 7.5 Z M9 0.5 L5.5 4 L9 7.5 Z" fill="#d2d2d2"/></svg>
<div class="abs" style="left:0;top:11px;width:40px;height:2px;background:#3a3a3a"></div>
<div class="abs" style="left:0;top:52px;width:40px;height:2px;background:#3a3a3a"></div>
<div class="abs" style="left:0;top:148px;width:40px;height:2px;background:#3a3a3a"></div>
<div class="abs" style="left:0;top:190px;width:40px;height:2px;background:#3a3a3a"></div>
<div class="abs" style="left:10px;top:16px;width:20px;height:4px;background:repeating-linear-gradient(90deg,#333 0 1px,#535353 1px 2px)"></div>
<div class="abs" style="left:10px;top:57px;width:20px;height:4px;background:repeating-linear-gradient(90deg,#333 0 1px,#535353 1px 2px)"></div>
<div class="abs" style="left:10px;top:153px;width:20px;height:4px;background:repeating-linear-gradient(90deg,#333 0 1px,#535353 1px 2px)"></div>
<svg class="abs" style="left:8px;top:24px" width="24" height="24"><circle cx="9" cy="9" r="7.5" fill="#e0e0e0"/><circle cx="15" cy="14" r="7.5" fill="#bdbdbd"/><circle cx="13" cy="11" r="5" fill="#8a8a8a" opacity=".8"/></svg>
<svg class="abs" style="left:9px;top:119px" width="24" height="22"><rect x="1" y="1" width="12" height="13" fill="none" stroke="#d2d2d2" stroke-width="1.3"/><rect x="6" y="7" width="14" height="11" fill="#535353" stroke="#d2d2d2" stroke-width="1.3"/></svg>
<div class="abs" style="left:28px;top:66px;width:3px;height:14px;border:1px solid #d2d2d2;border-left:none"></div>
<svg class="abs" style="left:11px;top:165px" width="20" height="16"><path d="M0 1H19" stroke="#d2d2d2" stroke-width="1.2"/><path d="M0 6.5H19" stroke="#d2d2d2" stroke-width="2.2"/><path d="M0 12.5H19" stroke="#d2d2d2" stroke-width="3.2"/></svg>
</div>
<div id="minipanel" class="abs" style="left:1318px;top:131px;width:38px;height:53px;background:#535353;border-radius:3px;box-shadow:0 0 0 1px #3a3a3a,1px 2px 4px rgba(0,0,0,.4)">
<div class="abs" style="left:0;top:0;width:38px;height:12px;background:#424242;border-radius:3px 3px 0 0"></div>
<svg class="abs" style="left:7px;top:2px" width="28" height="9"><path d="M0.5 0.5 L4 4 L0.5 7.5 Z M5 0.5 L8.5 4 L5 7.5 Z" fill="#d2d2d2"/><path d="M19 1 L25 7 M25 1 L19 7" stroke="#d2d2d2" stroke-width="2"/></svg>
<div class="abs" style="left:9px;top:16px;width:19px;height:4px;background:repeating-linear-gradient(90deg,#333 0 1px,#535353 1px 2px)"></div>
<svg class="abs" style="left:11px;top:28px" width="17" height="17"><rect x="0.5" y="0.5" width="9" height="9" fill="#9a9a9a" stroke="#d2d2d2"/><rect x="6.5" y="6.5" width="9" height="9" fill="#d2d2d2"/><rect x="6.5" y="6.5" width="3" height="3" fill="#6a6a6a"/></svg>
</div><!-- DOCK-E -->
<!-- TASKBAR-S --><div id="taskbar" class="abs" style="left:0;top:728px;width:1366px;height:40px;background:linear-gradient(180deg,rgba(255,255,255,.06),rgba(255,255,255,0) 30%),linear-gradient(90deg,#447aa6 0,#41789f 45%,#3e759c 100%)">
<div class="abs" style="left:79px;top:1px;width:54px;height:38px;background:rgba(255,255,255,.17);border:1px solid rgba(255,255,255,.3)"></div>
<div class="abs" style="left:133px;top:1px;width:5px;height:38px;background:rgba(255,255,255,.17);border:1px solid rgba(255,255,255,.3);border-left:none"></div>
<div class="abs" style="left:141px;top:1px;width:58px;height:38px;background:linear-gradient(90deg,#62b873 0,#58cc5c 30%,#4fd94a 53%,rgba(255,255,255,.2) 53%);border:1px solid rgba(255,255,255,.35)"></div>
<div class="abs" style="left:265px;top:1px;width:58px;height:38px;background:rgba(255,255,255,.17);border:1px solid rgba(255,255,255,.3)"></div>
<div class="abs" style="left:327px;top:1px;width:58px;height:38px;background:rgba(255,255,255,.17);border:1px solid rgba(255,255,255,.3)"></div>
<div class="abs" style="left:389px;top:1px;width:58px;height:38px;background:rgba(255,255,255,.17);border:1px solid rgba(255,255,255,.3)"></div>
<div class="abs" style="left:451px;top:1px;width:58px;height:38px;background:rgba(255,255,255,.38);border:1px solid rgba(255,255,255,.3)"></div>
<svg class="abs" style="left:29px;top:2px" width="36" height="36"><defs><linearGradient id="ieg" x1="0" y1="0" x2="0" y2="1"><stop offset="0" stop-color="#7fd6fb"/><stop offset=".55" stop-color="#2fa8ea"/><stop offset="1" stop-color="#5cc4f4"/></linearGradient></defs><path d="M26.8 25.6 A11.2 11.2 0 1 1 29.6 18.6" fill="none" stroke="url(#ieg)" stroke-width="6"/><rect x="9" y="15.8" width="23.5" height="4.8" fill="#3db2ee"/><path d="M3.5 32 C-2 26 8 10 22 5 C28 2.8 32 3.5 32.5 6.5" fill="none" stroke="#f4c62a" stroke-width="2.8" stroke-linecap="round"/></svg>
<svg class="abs" style="left:89px;top:5px" width="32" height="30"><rect x="1" y="3" width="30" height="22" rx="1.5" fill="#f6d57a"/><rect x="1" y="7" width="30" height="18" rx="1.5" fill="#fbe9a6"/><rect x="3" y="2" width="4" height="3" fill="#3a9a3a"/><rect x="11" y="3" width="4" height="3" fill="#c0502a"/><rect x="19" y="5" width="4" height="3" fill="#2a7ac0"/><path d="M6 28V17H26V28H22V21H10V28Z" fill="#9fd0f0" stroke="#6fb0e0" stroke-width="1"/><rect x="11" y="23" width="10" height="5" fill="#f2c14e"/></svg>
<svg class="abs" style="left:154px;top:3px" width="33" height="33" viewBox="0 0 32 32"><defs><radialGradient id="ffg" cx=".6" cy=".3" r=".8"><stop offset="0" stop-color="#ffe03a"/><stop offset=".45" stop-color="#ff8a1a"/><stop offset="1" stop-color="#e8203a"/></radialGradient></defs><circle cx="16" cy="17" r="13.5" fill="url(#ffg)"/><path d="M18 1 C24 5 30 10 29 19 C27 12 24 10 21 9 C21 5 19 3 18 1 Z" fill="#ffc42a"/><circle cx="15.5" cy="16" r="6.5" fill="#7a3ad0"/><path d="M9 14 C12 10 18 11 20 15 C17 13 13 14 11 17 Z" fill="#ff7a2a"/></svg>
<svg class="abs" style="left:216px;top:4px" width="32" height="32"><circle cx="16" cy="16" r="15" fill="#8fd8f8"/><circle cx="16" cy="16" r="13" fill="#38a8e8"/><circle cx="15" cy="15" r="7.5" fill="#3a6a9a"/><circle cx="13" cy="13" r="6" fill="#6a7ad8"/><path d="M3 20 C10 28 24 26 29 14 C27 22 18 24 12 20 Z" fill="#d8f2fc"/></svg>
<svg class="abs" style="left:277px;top:3px" width="36" height="34"><path d="M4 8 C3 4 6 2 8 5 C11 3 14 4 15 7 C18 5 19 1 23 2 C27 3 25 8 24 11 C28 11 33 13 33 17 C33 20 29 20 27 19 C28 23 29 24 32 24 C35 25 34 29 31 29 C27 30 25 27 24 25 C22 29 22 33 18 33 C14 33 15 28 16 24 C12 25 8 24 6 21 C3 22 1 20 2 17 C3 15 6 16 8 15 C5 13 4 11 4 8 Z" fill="#ad1216"/><circle cx="8.5" cy="8" r="2" fill="#fff"/><circle cx="12.5" cy="7" r="1.6" fill="#fff"/><circle cx="8.8" cy="8.3" r=".8" fill="#222"/><text x="14" y="22" font-family="Liberation Sans,sans-serif" font-size="8.5" font-weight="bold" fill="#f8e060">64</text></svg>
<svg class="abs" style="left:340px;top:3px" width="32" height="32"><path d="M1 1H27L31 5V31H1Z" fill="#2a4ad8"/><rect x="8" y="1" width="15" height="10" fill="#c8ccd8"/><rect x="17" y="2.5" width="4" height="7" fill="#2a3a9a"/><rect x="4" y="15" width="24" height="15" fill="#fff"/><path d="M6 18.5H26M6 22.5H26M6 26.5H17" stroke="#c8202a" stroke-width="1"/><text x="18" y="29.5" font-family="Liberation Mono,monospace" font-size="7.5" font-weight="bold" fill="#4a6a6a">64·</text></svg>
<svg class="abs" style="left:401px;top:3px" width="36" height="34"><defs><linearGradient id="wdg" x1="0" y1="0" x2="1" y2="1"><stop offset="0" stop-color="#9cc0ee"/><stop offset="1" stop-color="#2a58b4"/></linearGradient></defs><path d="M3 26 C1 14 4 5 12 3 L8 28 Z" fill="url(#wdg)"/><path d="M8 3.5 L30 5 L30 31 L8 27.5 Z" fill="#f6f8fc" stroke="#c4cee2" stroke-width=".7"/><path d="M3 26 C2 16 5 8 11 5 C7 12 8 20 9 27.5 Z" fill="url(#wdg)" opacity=".85"/><text x="10.5" y="16.5" font-family="Liberation Sans,sans-serif" font-size="12.5" font-weight="bold" font-style="italic" fill="#2a52ae">W</text><path d="M23.5 9H28.5M23.5 12H28.5M23.5 15H28.5" stroke="#2a52ae" stroke-width="1.5"/><path d="M12 19.2H28.5M12 22.2H28.5M12 25.2H28.5" stroke="#2a52ae" stroke-width="1.5"/></svg>
<div class="abs" style="left:466px;top:6px;width:28px;height:27px;background:#2a1206;border:2px solid #f58a1e;color:#f7941e;font-weight:bold;font-size:17px;line-height:22px;text-align:center;letter-spacing:-.3px">Ai</div>
<svg class="abs" style="left:1160px;top:18px" width="8" height="5"><path d="M0 5 L4 0 L8 5 Z" fill="#fff"/></svg>
<svg class="abs" style="left:1186px;top:13px" width="10" height="16"><rect x="0.7" y="2.2" width="8.6" height="12.6" rx="1" fill="none" stroke="#fff" stroke-width="1.4"/><rect x="3" y="0" width="4" height="2" fill="#fff"/><rect x="2.8" y="6" width="4.4" height="7" fill="#fff"/></svg>
<svg class="abs" style="left:1204px;top:15px" width="16" height="11" viewBox="0 0 16 14" preserveAspectRatio="none"><rect x="0" y="11" width="2" height="3" fill="#fff"/><rect x="3.3" y="8.5" width="2" height="5.5" fill="#fff"/><rect x="6.6" y="6" width="2" height="8" fill="#fff"/><rect x="9.9" y="3" width="2" height="11" fill="#fff"/><rect x="13.2" y="0" width="2" height="14" fill="#fff"/></svg>
<svg class="abs" style="left:1230px;top:14px" width="13" height="14" viewBox="0 0 14 16" preserveAspectRatio="none"><path d="M1 5.5H4L8.5 1.5V14.5L4 10.5H1Z" fill="#fff"/><path d="M10.5 4.5 Q13 8 10.5 11.5" fill="none" stroke="#fff" stroke-width="1.2"/></svg>
<div class="abs" style="left:1260px;top:14px;font-size:11px;line-height:14px;color:#fff;letter-spacing:-.5px">SLK</div>
<div class="abs" style="left:1290px;top:6px;width:60px;text-align:center;font-size:11px;color:#fff;line-height:15px;letter-spacing:-.4px">19:22</div>
<div class="abs" style="left:1289px;top:22px;width:60px;text-align:center;font-size:11px;color:#fff;line-height:15px;letter-spacing:-.25px">18.3.2020</div>
</div><!-- TASKBAR-E -->
<!-- MENU-S --><div id="mainmenu" class="abs menu" style="left:204px;top:-2px;width:299px;height:732px">
<div class="abs" style="left:27px;top:2px;width:1px;height:727px;background:#e2e2e2"></div><div class="abs" style="left:28px;top:2px;width:1px;height:727px;background:#fafafa"></div>
<div class="abs mi" style="left:33px;top:4px;letter-spacing:0.16px">Transformovat</div>
<svg class="abs" style="left:283px;top:11px" width="4" height="8"><path d="M0 0.3 L4 4 L0 7.7 Z" fill="#111"/></svg>
<div class="abs mi" style="left:33px;top:26px">Uspořádat</div>
<svg class="abs" style="left:283px;top:33px" width="4" height="8"><path d="M0 0.3 L4 4 L0 7.7 Z" fill="#111"/></svg>
<div class="abs" style="left:29px;top:51px;width:267px;height:1px;background:#d7d7d7"></div>
<div class="abs mi" style="left:33px;top:55px;letter-spacing:-0.33px">Seskupit</div>
<div class="abs mi" style="right:20px;top:55px">Ctrl+G</div>
<div class="abs mi dis" style="left:33px;top:77px">Rozdělit skupinu</div>
<div class="abs mi dis" style="right:20px;top:77px">Shift+Ctrl+G</div>
<div class="abs mi" style="left:33px;top:99px">Zamknout</div>
<svg class="abs" style="left:283px;top:106px" width="4" height="8"><path d="M0 0.3 L4 4 L0 7.7 Z" fill="#111"/></svg>
<div class="abs mi" style="left:33px;top:121px">Odemknout vše</div>
<div class="abs mi" style="right:20px;top:121px;letter-spacing:0.22px">Alt+Ctrl+2</div>
<div class="abs mi" style="left:33px;top:143px;letter-spacing:-0.36px">Skrýt</div>
<svg class="abs" style="left:283px;top:150px" width="4" height="8"><path d="M0 0.3 L4 4 L0 7.7 Z" fill="#111"/></svg>
<div class="abs mi dis" style="left:33px;top:165px;letter-spacing:-0.20px">Zobrazit vše</div>
<div class="abs mi dis" style="right:20px;top:165px;letter-spacing:0.22px">Alt+Ctrl+3</div>
<div class="abs" style="left:29px;top:190px;width:267px;height:1px;background:#d7d7d7"></div>
<div class="abs mi" style="left:33px;top:194px;letter-spacing:-0.25px">Rozdělit...</div>
<div class="abs mi dis" style="left:33px;top:216px;letter-spacing:-0.19px">Rozdělit vzhled</div>
<div class="abs mi" style="left:33px;top:238px">Rastrovat...</div>
<div class="abs mi" style="left:33px;top:260px">Vytvořit mřížku přechodů...</div>
<div class="abs mi dis" style="left:33px;top:282px">Vytvořit mozaiku objektů...</div>
<div class="abs mi" style="left:33px;top:304px">Sloučit průhlednost...</div>
<div class="abs" style="left:29px;top:329px;width:267px;height:1px;background:#d7d7d7"></div>
<div class="abs mi" style="left:33px;top:333px;letter-spacing:-0.11px">Zarovnat pixely na mřížku</div>
<div class="abs" style="left:29px;top:358px;width:267px;height:1px;background:#d7d7d7"></div>
<div class="abs mi" style="left:33px;top:362px">Řez</div>
<svg class="abs" style="left:283px;top:369px" width="4" height="8"><path d="M0 0.3 L4 4 L0 7.7 Z" fill="#111"/></svg>
<div class="abs mi" style="left:33px;top:384px;letter-spacing:-0.16px">Vytvořit řezací značky</div>
<div class="abs" style="left:29px;top:409px;width:267px;height:1px;background:#d7d7d7"></div>
<div class="abs" style="left:2px;top:413px;width:293px;height:22px;background:#d1e2f4;border:1px solid #7da2ce"></div>
<div class="abs mi" style="left:33px;top:413px;letter-spacing:-0.52px">Cesta</div>
<svg class="abs" style="left:283px;top:420px" width="4" height="8"><path d="M0 0.3 L4 4 L0 7.7 Z" fill="#111"/></svg>
<div class="abs mi" style="left:33px;top:435px">Tvar</div>
<svg class="abs" style="left:283px;top:442px" width="4" height="8"><path d="M0 0.3 L4 4 L0 7.7 Z" fill="#111"/></svg>
<div class="abs mi" style="left:33px;top:457px;letter-spacing:-0.35px">Vzorek</div>
<svg class="abs" style="left:283px;top:464px" width="4" height="8"><path d="M0 0.3 L4 4 L0 7.7 Z" fill="#111"/></svg>
<div class="abs mi" style="left:33px;top:479px">Prolnutí</div>
<svg class="abs" style="left:283px;top:486px" width="4" height="8"><path d="M0 0.3 L4 4 L0 7.7 Z" fill="#111"/></svg>
<div class="abs mi" style="left:33px;top:501px">Deformace obálkou</div>
<svg class="abs" style="left:283px;top:508px" width="4" height="8"><path d="M0 0.3 L4 4 L0 7.7 Z" fill="#111"/></svg>
<div class="abs mi" style="left:33px;top:523px;letter-spacing:-0.27px">Perspektiva</div>
<svg class="abs" style="left:283px;top:530px" width="4" height="8"><path d="M0 0.3 L4 4 L0 7.7 Z" fill="#111"/></svg>
<div class="abs mi" style="left:33px;top:545px">Živá malba</div>
<svg class="abs" style="left:283px;top:552px" width="4" height="8"><path d="M0 0.3 L4 4 L0 7.7 Z" fill="#111"/></svg>
<div class="abs mi" style="left:33px;top:567px">Vektorizovat obraz</div>
<svg class="abs" style="left:283px;top:574px" width="4" height="8"><path d="M0 0.3 L4 4 L0 7.7 Z" fill="#111"/></svg>
<div class="abs mi" style="left:33px;top:589px">Obtékání textu</div>
<svg class="abs" style="left:283px;top:596px" width="4" height="8"><path d="M0 0.3 L4 4 L0 7.7 Z" fill="#111"/></svg>
<div class="abs mi" style="left:33px;top:611px;letter-spacing:-0.24px">Grafika Line and Sketch</div>
<svg class="abs" style="left:283px;top:618px" width="4" height="8"><path d="M0 0.3 L4 4 L0 7.7 Z" fill="#111"/></svg>
<div class="abs" style="left:29px;top:636px;width:267px;height:1px;background:#d7d7d7"></div>
<div class="abs mi" style="left:33px;top:640px;letter-spacing:-0.31px">Ořezová maska</div>
<svg class="abs" style="left:283px;top:647px" width="4" height="8"><path d="M0 0.3 L4 4 L0 7.7 Z" fill="#111"/></svg>
<div class="abs mi" style="left:33px;top:662px;letter-spacing:-0.46px">Složená cesta</div>
<svg class="abs" style="left:283px;top:669px" width="4" height="8"><path d="M0 0.3 L4 4 L0 7.7 Z" fill="#111"/></svg>
<div class="abs mi" style="left:33px;top:684px;letter-spacing:-0.18px">Kreslicí plátna</div>
<svg class="abs" style="left:283px;top:691px" width="4" height="8"><path d="M0 0.3 L4 4 L0 7.7 Z" fill="#111"/></svg>
<div class="abs mi" style="left:33px;top:706px;letter-spacing:-0.42px">Graf</div>
<svg class="abs" style="left:283px;top:713px" width="4" height="8"><path d="M0 0.3 L4 4 L0 7.7 Z" fill="#111"/></svg>
</div><!-- MENU-E -->
<!-- SUBMENU-S --><div id="submenu" class="abs menu" style="left:498px;top:408px;width:264px;height:278px">
<div class="abs" style="left:27px;top:2px;width:1px;height:273px;background:#e2e2e2"></div><div class="abs" style="left:28px;top:2px;width:1px;height:273px;background:#fafafa"></div>
<div class="abs mi" style="left:33px;top:3px">Spojit</div>
<div class="abs mi" style="right:21px;top:3px">Ctrl+J</div>
<div class="abs mi" style="left:33px;top:25px">Sjednotit...</div>
<div class="abs mi" style="right:21px;top:25px">Alt+Ctrl+J</div>
<div class="abs" style="left:29px;top:50px;width:232px;height:1px;background:#d7d7d7"></div>
<div class="abs" style="left:2px;top:54px;width:258px;height:22px;background:#d1e2f4;border:1px solid #7da2ce"></div>
<div class="abs mi" style="left:33px;top:54px">Obrysy tahu</div>
<div class="abs mi" style="left:33px;top:76px;letter-spacing:-0.41px">Odsazená cesta...</div>
<div class="abs mi" style="left:33px;top:98px;letter-spacing:-0.11px">Obrátit směr cesty</div>
<div class="abs" style="left:29px;top:123px;width:232px;height:1px;background:#d7d7d7"></div>
<div class="abs mi" style="left:33px;top:127px">Zjednodušit...</div>
<div class="abs mi" style="left:33px;top:149px">Přidat kotevní body</div>
<div class="abs mi" style="left:33px;top:171px">Odstranit kotevní body</div>
<div class="abs mi" style="left:33px;top:193px">Rozdělit objekty pod</div>
<div class="abs" style="left:29px;top:218px;width:232px;height:1px;background:#d7d7d7"></div>
<div class="abs mi" style="left:33px;top:222px;letter-spacing:-0.18px">Rozdělit na mřížku...</div>
<div class="abs" style="left:29px;top:247px;width:232px;height:1px;background:#d7d7d7"></div>
<div class="abs mi" style="left:33px;top:251px">Vyčistit...</div>
</div><!-- SUBMENU-E -->
</div>
</body>
</html>
